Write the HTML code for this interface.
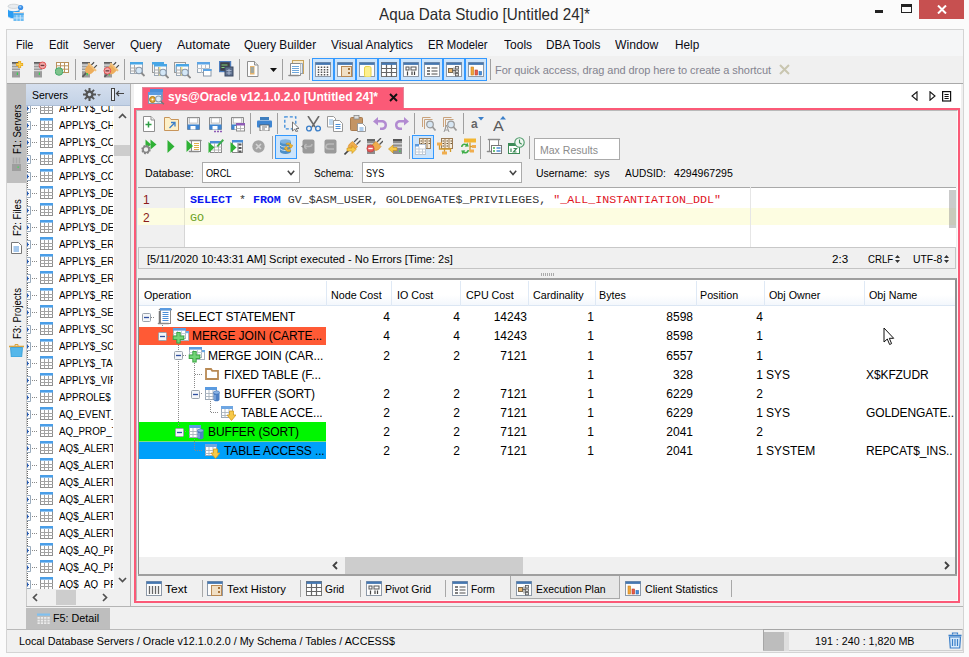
<!DOCTYPE html><html><head><meta charset="utf-8"><title>Aqua Data Studio [Untitled 24]*</title><style>
*{box-sizing:border-box}
html,body{margin:0;padding:0}
body{width:969px;height:657px;overflow:hidden;position:relative;background:#fbfbfb;font-family:"Liberation Sans",sans-serif;font-size:11px;color:#000}
.a{position:absolute}
.t{position:absolute;white-space:nowrap;line-height:14px;height:14px}
.m{position:absolute;white-space:nowrap;line-height:14px;height:14px}
.mono{font-family:"Liberation Mono",monospace}
.sep{position:absolute;width:1px;background:#a0a0a0}
.tg{position:absolute;top:58px;width:22px;height:23px;border:1px solid #3399ff;background:#cce4fb}
.row{position:absolute;left:26px;width:87px;height:17px;overflow:hidden}
.row .t{left:33px;top:2px;font-size:11px}
.hd{position:absolute;top:288px;font-size:11px;line-height:14px;white-space:nowrap}
.cs{position:absolute;top:281px;width:1px;height:25px;background:#e0e0e0}
.n{position:absolute;font-size:12px;line-height:14px;white-space:nowrap;text-align:right}
.l{position:absolute;font-size:12px;line-height:14px;white-space:nowrap}
.bt{position:absolute;top:581px;font-size:11px;line-height:14px;white-space:nowrap}
.bs{position:absolute;top:580px;width:1px;height:17px;background:#a8a8a8}
</style></head><body>
<div class="a" style="left:6px;top:29px;width:958px;height:624px;background:#f0f0f0;border:1px solid #d4d4d4"></div>
<div class="a" style="left:7px;top:30px;width:956px;height:26px;background:#f5f6f7"></div>
<div class="a" style="left:7px;top:83px;width:956px;height:1px;background:#a9a9a9"></div>
<div class="t" style="left:379.3px;top:4.85px;font-size:16.5px;transform:scaleX(0.923);transform-origin:0 0;line-height:18px;height:18px;color:#2b2b2b;">Aqua Data Studio [Untitled 24]*</div>
<svg class="a" style="left:7px;top:3px" width="18" height="19" viewBox="0 0 18 19" ><path d="M1 3.500v10c0 1.200 2.600 2.200 5.800 2.200s5.800-1 5.800-2.200v-10z" fill="#2b9df3"/>
<path d="M1 3.500v2.800c0 1.200 2.600 2 5.800 2s5.800-.8 5.800-2v-2.800z" fill="#f1f4f7"/><ellipse cx="6.800" cy="3.300" rx="5.800" ry="2.100" fill="#e9ecef" stroke="#c4c8cc" stroke-width=".7"/>
<path d="M1 13c0 1.200 2.600 2.200 5.800 2.200v.8c-3.200 0-5.800-1-5.800-2.200z" fill="#dfe9f2"/>
<circle cx="13.600" cy="4.500" r="2.600" fill="#3a8ee6"/><circle cx="13.300" cy="3.900" r="1.100" fill="#8cc3f5"/>
<rect x="6.500" y="9" width="10.200" height="9" fill="#6fbdf2"/><rect x="6.500" y="9" width="10.200" height="1.300" fill="#f5dcc6"/><rect x="6.500" y="10.300" width="10.200" height="1.600" fill="#4aa8ee"/>
<path d="M9.900 12v6M13.300 12v6M6.500 15h10.200" stroke="#cfe8fb" stroke-width=".9"/></svg>
<div class="a" style="left:875px;top:10px;width:8px;height:2.500px;background:#222"></div>
<div class="a" style="left:901px;top:4px;width:11px;height:9px;border:1px solid #222;border-top-width:3px"></div>
<div class="a" style="left:919px;top:0;width:45px;height:19px;background:#c75050"></div>
<svg class="a" style="left:937px;top:5px" width="10" height="9" viewBox="0 0 10 9" ><path d="M1 0.5l8 8M9 0.5l-8 8" stroke="#fff" stroke-width="2"/></svg>
<div class="m" style="left:15.6px;top:37.6px;font-size:12.8px;transform:scaleX(0.839);transform-origin:0 0;color:#0a0a14;">File</div>
<div class="m" style="left:48.7px;top:37.6px;font-size:12.8px;transform:scaleX(0.875);transform-origin:0 0;color:#0a0a14;">Edit</div>
<div class="m" style="left:83.1px;top:37.6px;font-size:12.8px;transform:scaleX(0.846);transform-origin:0 0;color:#0a0a14;">Server</div>
<div class="m" style="left:129.8px;top:37.6px;font-size:12.8px;transform:scaleX(0.912);transform-origin:0 0;color:#0a0a14;">Query</div>
<div class="m" style="left:176.8px;top:37.6px;font-size:12.8px;transform:scaleX(0.973);transform-origin:0 0;color:#0a0a14;">Automate</div>
<div class="m" style="left:244px;top:37.6px;font-size:12.8px;transform:scaleX(0.921);transform-origin:0 0;color:#0a0a14;">Query Builder</div>
<div class="m" style="left:330.8px;top:37.6px;font-size:12.8px;transform:scaleX(0.924);transform-origin:0 0;color:#0a0a14;">Visual Analytics</div>
<div class="m" style="left:428.4px;top:37.6px;font-size:12.8px;transform:scaleX(0.882);transform-origin:0 0;color:#0a0a14;">ER Modeler</div>
<div class="m" style="left:503.7px;top:37.6px;font-size:12.8px;transform:scaleX(0.940);transform-origin:0 0;color:#0a0a14;">Tools</div>
<div class="m" style="left:546.4px;top:37.6px;font-size:12.8px;transform:scaleX(0.925);transform-origin:0 0;color:#0a0a14;">DBA Tools</div>
<div class="m" style="left:615.3px;top:37.6px;font-size:12.8px;transform:scaleX(0.951);transform-origin:0 0;color:#0a0a14;">Window</div>
<div class="m" style="left:674.5px;top:37.6px;font-size:12.8px;transform:scaleX(0.919);transform-origin:0 0;color:#0a0a14;">Help</div>
<svg class="a" style="left:11px;top:60px" width="16" height="18" viewBox="0 0 16 18" ><rect x="1" y="2" width="8" height="15.500" fill="#9c9c9c"/><rect x="1" y="2" width="8" height="1.500" fill="#5e5e5e"/>
<rect x="1" y="4.500" width="8" height="1.200" fill="#dcdcdc"/><rect x="1" y="7.300" width="8" height="1.200" fill="#dcdcdc"/><rect x="1" y="10" width="8" height="1.200" fill="#dcdcdc"/><rect x="5.800" y="12.500" width="1.200" height="2.500" fill="#35d24f"/><path d="M8.600 1v7M5.100 4.500h7" stroke="#e9a516" stroke-width="3"/><path d="M8.600 1.600v5.800M5.700 4.500h5.800" stroke="#f7cf55" stroke-width="1.600"/></svg>
<svg class="a" style="left:33px;top:60px" width="16" height="18" viewBox="0 0 16 18" ><rect x="1" y="2" width="8" height="15.500" fill="#9c9c9c"/><rect x="1" y="2" width="8" height="1.500" fill="#5e5e5e"/>
<rect x="1" y="4.500" width="8" height="1.200" fill="#dcdcdc"/><rect x="1" y="7.300" width="8" height="1.200" fill="#dcdcdc"/><rect x="1" y="10" width="8" height="1.200" fill="#dcdcdc"/><rect x="5.800" y="12.500" width="1.200" height="2.500" fill="#35d24f"/><circle cx="9.500" cy="5.400" r="3.400" fill="#f2a7a7" stroke="#e05252" stroke-width="1"/><rect x="7.600" y="4.800" width="3.800" height="1.300" fill="#6b3a3a"/></svg>
<svg class="a" style="left:55px;top:61px" width="15" height="16" viewBox="0 0 15 16" ><rect x="1.500" y="1.500" width="12" height="10" fill="#fff" stroke="#b9915c"/>
<path d="M5.500 1v11M9.500 1v11M1 4.800h13M1 8.200h13" stroke="#b9915c" stroke-width="1"/><circle cx="4" cy="10.500" r="3.800" fill="#7fc28c" stroke="#3da566" stroke-width=".9"/></svg>
<div class="sep" style="left:75px;top:59px;height:21px"></div>
<svg class="a" style="left:81px;top:60px" width="17" height="18" viewBox="0 0 17 18" ><rect x="1" y="2" width="8" height="15.500" fill="#9c9c9c"/><rect x="1" y="2" width="8" height="1.500" fill="#5e5e5e"/>
<rect x="1" y="4.500" width="8" height="1.200" fill="#dcdcdc"/><rect x="1" y="7.300" width="8" height="1.200" fill="#dcdcdc"/><rect x="1" y="10" width="8" height="1.200" fill="#dcdcdc"/>
<g transform="translate(9.200,9) rotate(45)"><path d="M-2 -3.500v-4M2 -3.500v-4" stroke="#4a4a4a" stroke-width="1.200"/><path d="M0 4.500v6.500" stroke="#5a5a5a" stroke-width="1.700"/>
<path d="M-4.200 -2.500v3.500c0 2.600 1.800 4.600 4.200 4.600s4.200-2 4.200-4.600v-3.500z" fill="#edae5c"/><rect x="-5.600" y="-3.800" width="11.200" height="2" rx=".8" fill="#f1c07c"/></g>
<rect x="5.600" y="13" width="1.300" height="2.300" fill="#35d24f"/></svg>
<svg class="a" style="left:103px;top:60px" width="17" height="18" viewBox="0 0 17 18" ><rect x="1" y="2" width="8" height="15.500" fill="#9c9c9c"/><rect x="1" y="2" width="8" height="1.500" fill="#5e5e5e"/>
<rect x="1" y="4.500" width="8" height="1.200" fill="#dcdcdc"/><rect x="1" y="7.300" width="8" height="1.200" fill="#dcdcdc"/><rect x="1" y="10" width="8" height="1.200" fill="#dcdcdc"/>
<g transform="translate(9.200,9) rotate(45)"><path d="M-2 -3.500v-4M2 -3.500v-4" stroke="#4a4a4a" stroke-width="1.200"/><path d="M0 4.500v6.500" stroke="#5a5a5a" stroke-width="1.700"/>
<path d="M-4.200 -2.500v3.500c0 2.600 1.800 4.600 4.200 4.600s4.200-2 4.200-4.600v-3.500z" fill="#edae5c"/><rect x="-5.600" y="-3.800" width="11.200" height="2" rx=".8" fill="#f1c07c"/></g>
<rect x="5.600" y="13" width="1.300" height="2.300" fill="#35d24f"/><circle cx="4.400" cy="10.800" r="3.400" fill="#f2a7a7" stroke="#e05252" stroke-width="1"/><rect x="2.500" y="10.200" width="3.800" height="1.300" fill="#6b3a3a"/></svg>
<div class="sep" style="left:124px;top:59px;height:21px"></div>
<svg class="a" style="left:130px;top:62px" width="17" height="17" viewBox="0 0 17 17" ><g transform="translate(0,0)"><rect x="0.5" y="0.5" width="12" height="11" fill="#fafafa" stroke="#9aa7b5"/><rect x="0" y="0" width="13" height="2.500" fill="#48a6e6"/>
<path d="M4.500 3v9M0 6h8M0 9h7" stroke="#a9a9a9" stroke-width="1"/><circle cx="9" cy="8.500" r="3.200" fill="#d4e7f7" stroke="#8a98a8" stroke-width="1.100"/><path d="M11.500 11l3 3" stroke="#8a8a8a" stroke-width="1.800"/></g></svg>
<svg class="a" style="left:152px;top:62px" width="17" height="17" viewBox="0 0 17 17" ><rect x="0.5" y="0.5" width="11" height="10" fill="#f4f4f4" stroke="#9a9a9a"/><rect x="0" y="0" width="12" height="2.500" fill="#48a6e6"/><g transform="translate(2,2)"><rect x="0.5" y="0.5" width="12" height="11" fill="#fafafa" stroke="#9aa7b5"/><rect x="0" y="0" width="13" height="2.500" fill="#48a6e6"/><rect x="5" y="3" width="1.500" height="8.500" fill="#f7e98a"/>
<path d="M4.500 3v9M0 6h8M0 9h7" stroke="#a9a9a9" stroke-width="1"/><circle cx="9" cy="8.500" r="3.200" fill="#d4e7f7" stroke="#8a98a8" stroke-width="1.100"/><path d="M11.500 11l3 3" stroke="#8a8a8a" stroke-width="1.800"/></g></svg>
<svg class="a" style="left:174px;top:62px" width="17" height="17" viewBox="0 0 17 17" ><rect x="0.5" y="0.5" width="11" height="10" fill="#f4f4f4" stroke="#9a9a9a"/><rect x="1" y="3" width="1.500" height="7" fill="#b9dcf5"/><g transform="translate(2,2)"><rect x="0.5" y="0.5" width="12" height="11" fill="#fafafa" stroke="#9aa7b5"/><rect x="0" y="0" width="13" height="2.500" fill="#48a6e6"/><rect x="5" y="3" width="1.500" height="8.500" fill="#f7e98a"/>
<path d="M4.500 3v9M0 6h8M0 9h7" stroke="#a9a9a9" stroke-width="1"/><circle cx="9" cy="8.500" r="3.200" fill="#d4e7f7" stroke="#8a98a8" stroke-width="1.100"/><path d="M11.500 11l3 3" stroke="#8a8a8a" stroke-width="1.800"/></g></svg>
<svg class="a" style="left:197px;top:62px" width="15" height="15" viewBox="0 0 15 15" ><rect x="0.5" y="0.5" width="12" height="10" fill="#fafafa" stroke="#9aa7b5"/><rect x="0" y="0" width="13" height="2.500" fill="#5aa4e6"/><path d="M4.500 3v8M8.500 3v8M0 6.500h13" stroke="#b5c0cc"/>
<rect x="6.500" y="7.500" width="7.500" height="6.500" fill="#fff" stroke="#8a98a8"/><rect x="6" y="7" width="8.500" height="2" fill="#5aa4e6"/></svg>
<svg class="a" style="left:219px;top:61px" width="15" height="16" viewBox="0 0 15 16" ><rect x="0.500" y="0.500" width="11" height="10" fill="#3c4048" stroke="#4f7fc0" stroke-width="1.400"/><path d="M2.500 4h6M2.500 6.500h4" stroke="#7fd07f" stroke-width="1"/>
<rect x="6" y="6" width="8" height="9" fill="#5d6e8c" stroke="#3d4a63"/><path d="M7.500 9.500h5M7.500 12h5M10 8v6" stroke="#aebbd2" stroke-width=".9"/></svg>
<div class="sep" style="left:239px;top:59px;height:21px"></div>
<svg class="a" style="left:246px;top:61px" width="13" height="16" viewBox="0 0 13 16" ><path d="M1.500 0.500h7l3.500 3.500v11.500h-10.500z" fill="#fdfdfd" stroke="#8f8f8f"/><path d="M8.500 0.500v3.500h3.500" fill="#e9e9e9" stroke="#8f8f8f"/>
<rect x="4" y="5" width="4.500" height="8.500" fill="#e8b46a"/><path d="M4.500 7h3.500M4.500 9h3.500M4.500 11h3.500" stroke="#5b9bd5" stroke-width="1"/></svg>
<svg class="a" style="left:270px;top:68px" width="7" height="4" viewBox="0 0 7 4" ><path d="M0 0h7l-3.500 4z" fill="#111"/></svg>
<div class="sep" style="left:282px;top:59px;height:21px"></div>
<div class="sep" style="left:309px;top:59px;height:21px"></div>
<svg class="a" style="left:288px;top:60px" width="17" height="18" viewBox="0 0 17 18" ><rect x="4.500" y="0.500" width="11" height="13" fill="#f7ecd2" stroke="#c9a45c"/><path d="M2.500 3.500h10v12h-10z" fill="#fff" stroke="#8a8a8a"/><path d="M12.500 3.500h2v10h-2" fill="#e7eef7" stroke="#7f95b5" stroke-width=".8"/>
<path d="M4 6.500h7M4 8.500h7M4 10.500h7M4 12.500h7" stroke="#6fa8dc" stroke-width="1"/><path d="M1 15.500h9.500" stroke="#8a8a8a" stroke-width="1.600" stroke-linecap="round"/></svg>
<div class="tg" style="left:312px"></div>
<div class="tg" style="left:334px"></div>
<div class="tg" style="left:356px"></div>
<div class="tg" style="left:378px"></div>
<div class="tg" style="left:400px"></div>
<div class="tg" style="left:421px"></div>
<div class="tg" style="left:443px"></div>
<div class="tg" style="left:465px"></div>
<svg class="a" style="left:315px;top:62px" width="16" height="15" viewBox="0 0 16 15" ><rect x="0.5" y="0.5" width="15" height="14" fill="#fdfdfd" stroke="#8d99a8"/><rect x="0.500" y="0.500" width="15" height="2.400" fill="#4577b0"/><path d="M3.500 4.500v9M6.500 4.500v9M9.500 4.500v9M12.500 4.500v9" stroke="#555" stroke-width="1.500" stroke-dasharray="1.500 1"/></svg>
<svg class="a" style="left:337px;top:62px" width="16" height="15" viewBox="0 0 16 15" ><rect x="0.5" y="0.5" width="15" height="14" fill="#fdfdfd" stroke="#8d99a8"/><rect x="0.500" y="0.500" width="15" height="2.400" fill="#4577b0"/><rect x="4.500" y="4.500" width="10" height="10" fill="#f1dfc4" stroke="#b98a55"/><rect x="11" y="6" width="2" height="2" fill="#a8743c"/><rect x="11" y="10" width="2" height="2" fill="#a8743c"/></svg>
<svg class="a" style="left:359px;top:62px" width="16" height="15" viewBox="0 0 16 15" ><rect x="0.5" y="0.5" width="15" height="14" fill="#fdfdfd" stroke="#8d99a8"/><rect x="0.500" y="0.500" width="15" height="2.400" fill="#4577b0"/><rect x="5.500" y="4.500" width="6.500" height="10.500" rx="1.500" fill="#fdf08e" stroke="#e9d24a"/></svg>
<svg class="a" style="left:381px;top:62px" width="16" height="15" viewBox="0 0 16 15" ><rect x="0.5" y="0.5" width="15" height="14" fill="#fff" stroke="#777"/><path d="M0 6.500h16M0 10.500h16M5.500 2v13M10.500 2v13" stroke="#666" stroke-width="1.200"/><rect x="0.500" y="0.500" width="15" height="2.400" fill="#4577b0"/></svg>
<svg class="a" style="left:403px;top:62px" width="16" height="15" viewBox="0 0 16 15" ><rect x="0.5" y="0.5" width="15" height="14" fill="#fdfdfd" stroke="#8d99a8"/><rect x="0.500" y="0.500" width="15" height="2.400" fill="#4577b0"/><rect x="3" y="5" width="3" height="3" fill="none" stroke="#555"/><rect x="8" y="5" width="5" height="3" fill="none" stroke="#555"/><path d="M4.500 9.500v4M9 13v-3.500M11.500 9.500v3.500" stroke="#444" stroke-width="1.200"/></svg>
<svg class="a" style="left:424px;top:62px" width="16" height="15" viewBox="0 0 16 15" ><rect x="0.5" y="0.5" width="15" height="14" fill="#fdfdfd" stroke="#8d99a8"/><rect x="0.500" y="0.500" width="15" height="2.400" fill="#4577b0"/><path d="M3 6h3M3 9h3M3 12h3" stroke="#555" stroke-width="1.400"/><path d="M7.500 6h6M7.500 9h6M7.500 12h6" stroke="#888" stroke-width="1.400"/></svg>
<svg class="a" style="left:446px;top:62px" width="16" height="15" viewBox="0 0 16 15" ><rect x="0.5" y="0.5" width="15" height="14" fill="#fdfdfd" stroke="#8d99a8"/><rect x="0.500" y="0.500" width="15" height="2.400" fill="#4577b0"/><rect x="2.500" y="6.500" width="4" height="4" fill="#e8b46a" stroke="#7a6a50"/><rect x="9.500" y="4.500" width="3" height="2.500" fill="#ddd" stroke="#555" stroke-width=".8"/><rect x="9.500" y="8" width="3" height="2.500" fill="#ddd" stroke="#555" stroke-width=".8"/><rect x="9.500" y="11.400" width="3" height="2.500" fill="#ddd" stroke="#555" stroke-width=".8"/><path d="M6.500 8.500h3M8 5.500v7" stroke="#555" stroke-width=".8"/></svg>
<svg class="a" style="left:468px;top:62px" width="16" height="15" viewBox="0 0 16 15" ><rect x="0.5" y="0.5" width="15" height="14" fill="#fdfdfd" stroke="#8d99a8"/><rect x="0.500" y="0.500" width="15" height="2.400" fill="#4577b0"/><rect x="3" y="5" width="2.600" height="8" fill="#f0a63a" stroke="#c9821c" stroke-width=".6"/><rect x="7" y="8" width="2.600" height="5" fill="#e85d4a" stroke="#b93c2c" stroke-width=".6"/><rect x="11" y="9.500" width="2.600" height="3.500" fill="#4a8fd8" stroke="#2f6cb3" stroke-width=".6"/></svg>
<div class="sep" style="left:490px;top:59px;height:21px"></div>
<div class="t" style="left:495px;top:63px;font-size:11px;color:#83838f;letter-spacing:-0.06px">For quick access, drag and drop here to create a shortcut</div>
<svg class="a" style="left:779px;top:64px" width="11" height="11" viewBox="0 0 11 11" ><path d="M1 1l9 9M10 1l-9 9" stroke="#c9c6b0" stroke-width="2"/></svg>
<div class="a" style="left:7px;top:84px;width:20px;height:99px;background:#bfbfbf"></div>
<div class="t" style="left:16.5px;top:154px;transform-origin:0 0;transform:rotate(-90deg) translateY(-7px) scaleX(.87);font-size:11px;color:#000">F1: Servers</div>
<div class="t" style="left:16.5px;top:236px;transform-origin:0 0;transform:rotate(-90deg) translateY(-7px) scaleX(.87);font-size:11px;color:#000">F2: Files</div>
<div class="t" style="left:16.5px;top:339px;transform-origin:0 0;transform:rotate(-90deg) translateY(-7px) scaleX(.87);font-size:11px;color:#000">F3: Projects</div>
<svg class="a" style="left:11px;top:157px" width="11" height="14" viewBox="0 0 11 14" ><rect x="1" y="7" width="9" height="7" fill="#9e9e9e"/><path d="M2.500 0.500v6M5.500 0.500v6M8.500 0.500v6" stroke="#a9a9a9" stroke-width="1.600"/><rect x="6.500" y="9.500" width="1.300" height="1.300" fill="#39e353"/></svg>
<svg class="a" style="left:11px;top:242px" width="11" height="12" viewBox="0 0 11 12" ><path d="M0.500 0.500h7l3 3v8h-10z" fill="#fff" stroke="#777"/><path d="M2.500 5h5.500M2.500 7h5.500M2.500 9h5.500" stroke="#4a8fd8" stroke-width="1"/></svg>
<svg class="a" style="left:9px;top:344px" width="15" height="13" viewBox="0 0 15 13" ><path d="M0 2.500h15" stroke="#d9a441" stroke-width="1.600"/><path d="M6 2v-1.500h3v1.500" fill="none" stroke="#d9a441"/><path d="M1.500 3.500h12l-.8 9.500h-10.400z" fill="#55b7ea" stroke="#2f9bd6" stroke-width=".8"/></svg>
<div class="a" style="left:26px;top:84px;width:105px;height:22px;background:linear-gradient(#d5dfee,#c3d2e6);border-bottom:1px solid #aebfd6"></div>
<div class="t" style="left:32px;top:88px;font-size:11px;transform:scaleX(.95);transform-origin:0 0">Servers</div>
<svg class="a" style="left:83px;top:88px" width="18" height="13" viewBox="0 0 18 13" ><g fill="#555"><circle cx="6.500" cy="6.500" r="4"/><g stroke="#555" stroke-width="2"><path d="M6.500 0v13M0 6.500h13M1.900 1.900l9.200 9.200M11.100 1.900l-9.200 9.200"/></g></g><circle cx="6.500" cy="6.500" r="1.700" fill="#d0dbea"/><path d="M14 6h4l-2 2.500z" fill="#777"/></svg>
<svg class="a" style="left:111px;top:88px" width="14" height="13" viewBox="0 0 14 13" ><rect x="0.500" y="0.500" width="3" height="12" fill="#eef2f8" stroke="#444"/><path d="M5.500 5.500h7.500M8 3l-2.500 2.500 2.500 2.500" fill="none" stroke="#444" stroke-width="1.200"/></svg>
<div class="a" style="left:26px;top:106px;width:88px;height:482.500px;background:#fff"></div>
<div class="a" style="left:27px;top:106px;width:0;height:482px;border-left:1px dotted #666"></div>
<div class="a" style="left:26px;top:106px;width:88px;height:482.500px;overflow:hidden">
<div class="row" style="left:0;top:-7px"><svg class="a" style="left:0;top:2px" width="30" height="14" viewBox="0 0 30 14">
<path d="M0 3.500h4.500v8h-4.500" fill="#fff" stroke="#9ab" stroke-width="1"/><path d="M0 7.500h3M1.500 5.500v4" stroke="#2a5db0" stroke-width="1.200"/>
<path d="M6 7.500h1M8 7.500h1M10 7.500h1" stroke="#888" stroke-width="1"/>
<rect x="14.500" y="0.500" width="12" height="12" fill="#fff" stroke="#8e8e8e"/><rect x="14" y="0" width="13" height="2.600" fill="#4a9ee8"/>
<path d="M18.500 3v9.500M22.500 3v9.500M14 6.500h13M14 9.500h13" stroke="#a3a3a3" stroke-width="1"/></svg><div class="t" style="transform:scaleX(.89);transform-origin:0 0">APPLY$_CDR</div></div>
<div class="row" style="left:0;top:10px"><svg class="a" style="left:0;top:2px" width="30" height="14" viewBox="0 0 30 14">
<path d="M0 3.500h4.500v8h-4.500" fill="#fff" stroke="#9ab" stroke-width="1"/><path d="M0 7.500h3M1.500 5.500v4" stroke="#2a5db0" stroke-width="1.200"/>
<path d="M6 7.500h1M8 7.500h1M10 7.500h1" stroke="#888" stroke-width="1"/>
<rect x="14.500" y="0.500" width="12" height="12" fill="#fff" stroke="#8e8e8e"/><rect x="14" y="0" width="13" height="2.600" fill="#4a9ee8"/>
<path d="M18.500 3v9.500M22.500 3v9.500M14 6.500h13M14 9.500h13" stroke="#a3a3a3" stroke-width="1"/></svg><div class="t" style="transform:scaleX(.89);transform-origin:0 0">APPLY$_CHA</div></div>
<div class="row" style="left:0;top:27px"><svg class="a" style="left:0;top:2px" width="30" height="14" viewBox="0 0 30 14">
<path d="M0 3.500h4.500v8h-4.500" fill="#fff" stroke="#9ab" stroke-width="1"/><path d="M0 7.500h3M1.500 5.500v4" stroke="#2a5db0" stroke-width="1.200"/>
<path d="M6 7.500h1M8 7.500h1M10 7.500h1" stroke="#888" stroke-width="1"/>
<rect x="14.500" y="0.500" width="12" height="12" fill="#fff" stroke="#8e8e8e"/><rect x="14" y="0" width="13" height="2.600" fill="#4a9ee8"/>
<path d="M18.500 3v9.500M22.500 3v9.500M14 6.500h13M14 9.500h13" stroke="#a3a3a3" stroke-width="1"/></svg><div class="t" style="transform:scaleX(.89);transform-origin:0 0">APPLY$_CON</div></div>
<div class="row" style="left:0;top:44px"><svg class="a" style="left:0;top:2px" width="30" height="14" viewBox="0 0 30 14">
<path d="M0 3.500h4.500v8h-4.500" fill="#fff" stroke="#9ab" stroke-width="1"/><path d="M0 7.500h3M1.500 5.500v4" stroke="#2a5db0" stroke-width="1.200"/>
<path d="M6 7.500h1M8 7.500h1M10 7.500h1" stroke="#888" stroke-width="1"/>
<rect x="14.500" y="0.500" width="12" height="12" fill="#fff" stroke="#8e8e8e"/><rect x="14" y="0" width="13" height="2.600" fill="#4a9ee8"/>
<path d="M18.500 3v9.500M22.500 3v9.500M14 6.500h13M14 9.500h13" stroke="#a3a3a3" stroke-width="1"/></svg><div class="t" style="transform:scaleX(.89);transform-origin:0 0">APPLY$_CON</div></div>
<div class="row" style="left:0;top:61px"><svg class="a" style="left:0;top:2px" width="30" height="14" viewBox="0 0 30 14">
<path d="M0 3.500h4.500v8h-4.500" fill="#fff" stroke="#9ab" stroke-width="1"/><path d="M0 7.500h3M1.500 5.500v4" stroke="#2a5db0" stroke-width="1.200"/>
<path d="M6 7.500h1M8 7.500h1M10 7.500h1" stroke="#888" stroke-width="1"/>
<rect x="14.500" y="0.500" width="12" height="12" fill="#fff" stroke="#8e8e8e"/><rect x="14" y="0" width="13" height="2.600" fill="#4a9ee8"/>
<path d="M18.500 3v9.500M22.500 3v9.500M14 6.500h13M14 9.500h13" stroke="#a3a3a3" stroke-width="1"/></svg><div class="t" style="transform:scaleX(.89);transform-origin:0 0">APPLY$_CON</div></div>
<div class="row" style="left:0;top:78px"><svg class="a" style="left:0;top:2px" width="30" height="14" viewBox="0 0 30 14">
<path d="M0 3.500h4.500v8h-4.500" fill="#fff" stroke="#9ab" stroke-width="1"/><path d="M0 7.500h3M1.500 5.500v4" stroke="#2a5db0" stroke-width="1.200"/>
<path d="M6 7.500h1M8 7.500h1M10 7.500h1" stroke="#888" stroke-width="1"/>
<rect x="14.500" y="0.500" width="12" height="12" fill="#fff" stroke="#8e8e8e"/><rect x="14" y="0" width="13" height="2.600" fill="#4a9ee8"/>
<path d="M18.500 3v9.500M22.500 3v9.500M14 6.500h13M14 9.500h13" stroke="#a3a3a3" stroke-width="1"/></svg><div class="t" style="transform:scaleX(.89);transform-origin:0 0">APPLY$_DES</div></div>
<div class="row" style="left:0;top:95px"><svg class="a" style="left:0;top:2px" width="30" height="14" viewBox="0 0 30 14">
<path d="M0 3.500h4.500v8h-4.500" fill="#fff" stroke="#9ab" stroke-width="1"/><path d="M0 7.500h3M1.500 5.500v4" stroke="#2a5db0" stroke-width="1.200"/>
<path d="M6 7.500h1M8 7.500h1M10 7.500h1" stroke="#888" stroke-width="1"/>
<rect x="14.500" y="0.500" width="12" height="12" fill="#fff" stroke="#8e8e8e"/><rect x="14" y="0" width="13" height="2.600" fill="#4a9ee8"/>
<path d="M18.500 3v9.500M22.500 3v9.500M14 6.500h13M14 9.500h13" stroke="#a3a3a3" stroke-width="1"/></svg><div class="t" style="transform:scaleX(.89);transform-origin:0 0">APPLY$_DES</div></div>
<div class="row" style="left:0;top:112px"><svg class="a" style="left:0;top:2px" width="30" height="14" viewBox="0 0 30 14">
<path d="M0 3.500h4.500v8h-4.500" fill="#fff" stroke="#9ab" stroke-width="1"/><path d="M0 7.500h3M1.500 5.500v4" stroke="#2a5db0" stroke-width="1.200"/>
<path d="M6 7.500h1M8 7.500h1M10 7.500h1" stroke="#888" stroke-width="1"/>
<rect x="14.500" y="0.500" width="12" height="12" fill="#fff" stroke="#8e8e8e"/><rect x="14" y="0" width="13" height="2.600" fill="#4a9ee8"/>
<path d="M18.500 3v9.500M22.500 3v9.500M14 6.500h13M14 9.500h13" stroke="#a3a3a3" stroke-width="1"/></svg><div class="t" style="transform:scaleX(.89);transform-origin:0 0">APPLY$_DES</div></div>
<div class="row" style="left:0;top:129px"><svg class="a" style="left:0;top:2px" width="30" height="14" viewBox="0 0 30 14">
<path d="M0 3.500h4.500v8h-4.500" fill="#fff" stroke="#9ab" stroke-width="1"/><path d="M0 7.500h3M1.500 5.500v4" stroke="#2a5db0" stroke-width="1.200"/>
<path d="M6 7.500h1M8 7.500h1M10 7.500h1" stroke="#888" stroke-width="1"/>
<rect x="14.500" y="0.500" width="12" height="12" fill="#fff" stroke="#8e8e8e"/><rect x="14" y="0" width="13" height="2.600" fill="#4a9ee8"/>
<path d="M18.500 3v9.500M22.500 3v9.500M14 6.500h13M14 9.500h13" stroke="#a3a3a3" stroke-width="1"/></svg><div class="t" style="transform:scaleX(.89);transform-origin:0 0">APPLY$_ERR</div></div>
<div class="row" style="left:0;top:146px"><svg class="a" style="left:0;top:2px" width="30" height="14" viewBox="0 0 30 14">
<path d="M0 3.500h4.500v8h-4.500" fill="#fff" stroke="#9ab" stroke-width="1"/><path d="M0 7.500h3M1.500 5.500v4" stroke="#2a5db0" stroke-width="1.200"/>
<path d="M6 7.500h1M8 7.500h1M10 7.500h1" stroke="#888" stroke-width="1"/>
<rect x="14.500" y="0.500" width="12" height="12" fill="#fff" stroke="#8e8e8e"/><rect x="14" y="0" width="13" height="2.600" fill="#4a9ee8"/>
<path d="M18.500 3v9.500M22.500 3v9.500M14 6.500h13M14 9.500h13" stroke="#a3a3a3" stroke-width="1"/></svg><div class="t" style="transform:scaleX(.89);transform-origin:0 0">APPLY$_ERR</div></div>
<div class="row" style="left:0;top:163px"><svg class="a" style="left:0;top:2px" width="30" height="14" viewBox="0 0 30 14">
<path d="M0 3.500h4.500v8h-4.500" fill="#fff" stroke="#9ab" stroke-width="1"/><path d="M0 7.500h3M1.500 5.500v4" stroke="#2a5db0" stroke-width="1.200"/>
<path d="M6 7.500h1M8 7.500h1M10 7.500h1" stroke="#888" stroke-width="1"/>
<rect x="14.500" y="0.500" width="12" height="12" fill="#fff" stroke="#8e8e8e"/><rect x="14" y="0" width="13" height="2.600" fill="#4a9ee8"/>
<path d="M18.500 3v9.500M22.500 3v9.500M14 6.500h13M14 9.500h13" stroke="#a3a3a3" stroke-width="1"/></svg><div class="t" style="transform:scaleX(.89);transform-origin:0 0">APPLY$_ERR</div></div>
<div class="row" style="left:0;top:180px"><svg class="a" style="left:0;top:2px" width="30" height="14" viewBox="0 0 30 14">
<path d="M0 3.500h4.500v8h-4.500" fill="#fff" stroke="#9ab" stroke-width="1"/><path d="M0 7.500h3M1.500 5.500v4" stroke="#2a5db0" stroke-width="1.200"/>
<path d="M6 7.500h1M8 7.500h1M10 7.500h1" stroke="#888" stroke-width="1"/>
<rect x="14.500" y="0.500" width="12" height="12" fill="#fff" stroke="#8e8e8e"/><rect x="14" y="0" width="13" height="2.600" fill="#4a9ee8"/>
<path d="M18.500 3v9.500M22.500 3v9.500M14 6.500h13M14 9.500h13" stroke="#a3a3a3" stroke-width="1"/></svg><div class="t" style="transform:scaleX(.89);transform-origin:0 0">APPLY$_REP</div></div>
<div class="row" style="left:0;top:197px"><svg class="a" style="left:0;top:2px" width="30" height="14" viewBox="0 0 30 14">
<path d="M0 3.500h4.500v8h-4.500" fill="#fff" stroke="#9ab" stroke-width="1"/><path d="M0 7.500h3M1.500 5.500v4" stroke="#2a5db0" stroke-width="1.200"/>
<path d="M6 7.500h1M8 7.500h1M10 7.500h1" stroke="#888" stroke-width="1"/>
<rect x="14.500" y="0.500" width="12" height="12" fill="#fff" stroke="#8e8e8e"/><rect x="14" y="0" width="13" height="2.600" fill="#4a9ee8"/>
<path d="M18.500 3v9.500M22.500 3v9.500M14 6.500h13M14 9.500h13" stroke="#a3a3a3" stroke-width="1"/></svg><div class="t" style="transform:scaleX(.89);transform-origin:0 0">APPLY$_SET</div></div>
<div class="row" style="left:0;top:214px"><svg class="a" style="left:0;top:2px" width="30" height="14" viewBox="0 0 30 14">
<path d="M0 3.500h4.500v8h-4.500" fill="#fff" stroke="#9ab" stroke-width="1"/><path d="M0 7.500h3M1.500 5.500v4" stroke="#2a5db0" stroke-width="1.200"/>
<path d="M6 7.500h1M8 7.500h1M10 7.500h1" stroke="#888" stroke-width="1"/>
<rect x="14.500" y="0.500" width="12" height="12" fill="#fff" stroke="#8e8e8e"/><rect x="14" y="0" width="13" height="2.600" fill="#4a9ee8"/>
<path d="M18.500 3v9.500M22.500 3v9.500M14 6.500h13M14 9.500h13" stroke="#a3a3a3" stroke-width="1"/></svg><div class="t" style="transform:scaleX(.89);transform-origin:0 0">APPLY$_SOU</div></div>
<div class="row" style="left:0;top:231px"><svg class="a" style="left:0;top:2px" width="30" height="14" viewBox="0 0 30 14">
<path d="M0 3.500h4.500v8h-4.500" fill="#fff" stroke="#9ab" stroke-width="1"/><path d="M0 7.500h3M1.500 5.500v4" stroke="#2a5db0" stroke-width="1.200"/>
<path d="M6 7.500h1M8 7.500h1M10 7.500h1" stroke="#888" stroke-width="1"/>
<rect x="14.500" y="0.500" width="12" height="12" fill="#fff" stroke="#8e8e8e"/><rect x="14" y="0" width="13" height="2.600" fill="#4a9ee8"/>
<path d="M18.500 3v9.500M22.500 3v9.500M14 6.500h13M14 9.500h13" stroke="#a3a3a3" stroke-width="1"/></svg><div class="t" style="transform:scaleX(.89);transform-origin:0 0">APPLY$_SOU</div></div>
<div class="row" style="left:0;top:248px"><svg class="a" style="left:0;top:2px" width="30" height="14" viewBox="0 0 30 14">
<path d="M0 3.500h4.500v8h-4.500" fill="#fff" stroke="#9ab" stroke-width="1"/><path d="M0 7.500h3M1.500 5.500v4" stroke="#2a5db0" stroke-width="1.200"/>
<path d="M6 7.500h1M8 7.500h1M10 7.500h1" stroke="#888" stroke-width="1"/>
<rect x="14.500" y="0.500" width="12" height="12" fill="#fff" stroke="#8e8e8e"/><rect x="14" y="0" width="13" height="2.600" fill="#4a9ee8"/>
<path d="M18.500 3v9.500M22.500 3v9.500M14 6.500h13M14 9.500h13" stroke="#a3a3a3" stroke-width="1"/></svg><div class="t" style="transform:scaleX(.89);transform-origin:0 0">APPLY$_TAB</div></div>
<div class="row" style="left:0;top:265px"><svg class="a" style="left:0;top:2px" width="30" height="14" viewBox="0 0 30 14">
<path d="M0 3.500h4.500v8h-4.500" fill="#fff" stroke="#9ab" stroke-width="1"/><path d="M0 7.500h3M1.500 5.500v4" stroke="#2a5db0" stroke-width="1.200"/>
<path d="M6 7.500h1M8 7.500h1M10 7.500h1" stroke="#888" stroke-width="1"/>
<rect x="14.500" y="0.500" width="12" height="12" fill="#fff" stroke="#8e8e8e"/><rect x="14" y="0" width="13" height="2.600" fill="#4a9ee8"/>
<path d="M18.500 3v9.500M22.500 3v9.500M14 6.500h13M14 9.500h13" stroke="#a3a3a3" stroke-width="1"/></svg><div class="t" style="transform:scaleX(.89);transform-origin:0 0">APPLY$_VIR</div></div>
<div class="row" style="left:0;top:282px"><svg class="a" style="left:0;top:2px" width="30" height="14" viewBox="0 0 30 14">
<path d="M0 3.500h4.500v8h-4.500" fill="#fff" stroke="#9ab" stroke-width="1"/><path d="M0 7.500h3M1.500 5.500v4" stroke="#2a5db0" stroke-width="1.200"/>
<path d="M6 7.500h1M8 7.500h1M10 7.500h1" stroke="#888" stroke-width="1"/>
<rect x="14.500" y="0.500" width="12" height="12" fill="#fff" stroke="#8e8e8e"/><rect x="14" y="0" width="13" height="2.600" fill="#4a9ee8"/>
<path d="M18.500 3v9.500M22.500 3v9.500M14 6.500h13M14 9.500h13" stroke="#a3a3a3" stroke-width="1"/></svg><div class="t" style="transform:scaleX(.89);transform-origin:0 0">APPROLE$</div></div>
<div class="row" style="left:0;top:299px"><svg class="a" style="left:0;top:2px" width="30" height="14" viewBox="0 0 30 14">
<path d="M0 3.500h4.500v8h-4.500" fill="#fff" stroke="#9ab" stroke-width="1"/><path d="M0 7.500h3M1.500 5.500v4" stroke="#2a5db0" stroke-width="1.200"/>
<path d="M6 7.500h1M8 7.500h1M10 7.500h1" stroke="#888" stroke-width="1"/>
<rect x="14.500" y="0.500" width="12" height="12" fill="#fff" stroke="#8e8e8e"/><rect x="14" y="0" width="13" height="2.600" fill="#4a9ee8"/>
<path d="M18.500 3v9.500M22.500 3v9.500M14 6.500h13M14 9.500h13" stroke="#a3a3a3" stroke-width="1"/></svg><div class="t" style="transform:scaleX(.89);transform-origin:0 0">AQ_EVENT_T</div></div>
<div class="row" style="left:0;top:316px"><svg class="a" style="left:0;top:2px" width="30" height="14" viewBox="0 0 30 14">
<path d="M0 3.500h4.500v8h-4.500" fill="#fff" stroke="#9ab" stroke-width="1"/><path d="M0 7.500h3M1.500 5.500v4" stroke="#2a5db0" stroke-width="1.200"/>
<path d="M6 7.500h1M8 7.500h1M10 7.500h1" stroke="#888" stroke-width="1"/>
<rect x="14.500" y="0.500" width="12" height="12" fill="#fff" stroke="#8e8e8e"/><rect x="14" y="0" width="13" height="2.600" fill="#4a9ee8"/>
<path d="M18.500 3v9.500M22.500 3v9.500M14 6.500h13M14 9.500h13" stroke="#a3a3a3" stroke-width="1"/></svg><div class="t" style="transform:scaleX(.89);transform-origin:0 0">AQ_PROP_TA</div></div>
<div class="row" style="left:0;top:333px"><svg class="a" style="left:0;top:2px" width="30" height="14" viewBox="0 0 30 14">
<path d="M0 3.500h4.500v8h-4.500" fill="#fff" stroke="#9ab" stroke-width="1"/><path d="M0 7.500h3M1.500 5.500v4" stroke="#2a5db0" stroke-width="1.200"/>
<path d="M6 7.500h1M8 7.500h1M10 7.500h1" stroke="#888" stroke-width="1"/>
<rect x="14.500" y="0.500" width="12" height="12" fill="#fff" stroke="#8e8e8e"/><rect x="14" y="0" width="13" height="2.600" fill="#4a9ee8"/>
<path d="M18.500 3v9.500M22.500 3v9.500M14 6.500h13M14 9.500h13" stroke="#a3a3a3" stroke-width="1"/></svg><div class="t" style="transform:scaleX(.89);transform-origin:0 0">AQ$_ALERT_</div></div>
<div class="row" style="left:0;top:350px"><svg class="a" style="left:0;top:2px" width="30" height="14" viewBox="0 0 30 14">
<path d="M0 3.500h4.500v8h-4.500" fill="#fff" stroke="#9ab" stroke-width="1"/><path d="M0 7.500h3M1.500 5.500v4" stroke="#2a5db0" stroke-width="1.200"/>
<path d="M6 7.500h1M8 7.500h1M10 7.500h1" stroke="#888" stroke-width="1"/>
<rect x="14.500" y="0.500" width="12" height="12" fill="#fff" stroke="#8e8e8e"/><rect x="14" y="0" width="13" height="2.600" fill="#4a9ee8"/>
<path d="M18.500 3v9.500M22.500 3v9.500M14 6.500h13M14 9.500h13" stroke="#a3a3a3" stroke-width="1"/></svg><div class="t" style="transform:scaleX(.89);transform-origin:0 0">AQ$_ALERT_</div></div>
<div class="row" style="left:0;top:367px"><svg class="a" style="left:0;top:2px" width="30" height="14" viewBox="0 0 30 14">
<path d="M0 3.500h4.500v8h-4.500" fill="#fff" stroke="#9ab" stroke-width="1"/><path d="M0 7.500h3M1.500 5.500v4" stroke="#2a5db0" stroke-width="1.200"/>
<path d="M6 7.500h1M8 7.500h1M10 7.500h1" stroke="#888" stroke-width="1"/>
<rect x="14.500" y="0.500" width="12" height="12" fill="#fff" stroke="#8e8e8e"/><rect x="14" y="0" width="13" height="2.600" fill="#4a9ee8"/>
<path d="M18.500 3v9.500M22.500 3v9.500M14 6.500h13M14 9.500h13" stroke="#a3a3a3" stroke-width="1"/></svg><div class="t" style="transform:scaleX(.89);transform-origin:0 0">AQ$_ALERT_</div></div>
<div class="row" style="left:0;top:384px"><svg class="a" style="left:0;top:2px" width="30" height="14" viewBox="0 0 30 14">
<path d="M0 3.500h4.500v8h-4.500" fill="#fff" stroke="#9ab" stroke-width="1"/><path d="M0 7.500h3M1.500 5.500v4" stroke="#2a5db0" stroke-width="1.200"/>
<path d="M6 7.500h1M8 7.500h1M10 7.500h1" stroke="#888" stroke-width="1"/>
<rect x="14.500" y="0.500" width="12" height="12" fill="#fff" stroke="#8e8e8e"/><rect x="14" y="0" width="13" height="2.600" fill="#4a9ee8"/>
<path d="M18.500 3v9.500M22.500 3v9.500M14 6.500h13M14 9.500h13" stroke="#a3a3a3" stroke-width="1"/></svg><div class="t" style="transform:scaleX(.89);transform-origin:0 0">AQ$_ALERT_</div></div>
<div class="row" style="left:0;top:401px"><svg class="a" style="left:0;top:2px" width="30" height="14" viewBox="0 0 30 14">
<path d="M0 3.500h4.500v8h-4.500" fill="#fff" stroke="#9ab" stroke-width="1"/><path d="M0 7.500h3M1.500 5.500v4" stroke="#2a5db0" stroke-width="1.200"/>
<path d="M6 7.500h1M8 7.500h1M10 7.500h1" stroke="#888" stroke-width="1"/>
<rect x="14.500" y="0.500" width="12" height="12" fill="#fff" stroke="#8e8e8e"/><rect x="14" y="0" width="13" height="2.600" fill="#4a9ee8"/>
<path d="M18.500 3v9.500M22.500 3v9.500M14 6.500h13M14 9.500h13" stroke="#a3a3a3" stroke-width="1"/></svg><div class="t" style="transform:scaleX(.89);transform-origin:0 0">AQ$_ALERT_</div></div>
<div class="row" style="left:0;top:418px"><svg class="a" style="left:0;top:2px" width="30" height="14" viewBox="0 0 30 14">
<path d="M0 3.500h4.500v8h-4.500" fill="#fff" stroke="#9ab" stroke-width="1"/><path d="M0 7.500h3M1.500 5.500v4" stroke="#2a5db0" stroke-width="1.200"/>
<path d="M6 7.500h1M8 7.500h1M10 7.500h1" stroke="#888" stroke-width="1"/>
<rect x="14.500" y="0.500" width="12" height="12" fill="#fff" stroke="#8e8e8e"/><rect x="14" y="0" width="13" height="2.600" fill="#4a9ee8"/>
<path d="M18.500 3v9.500M22.500 3v9.500M14 6.500h13M14 9.500h13" stroke="#a3a3a3" stroke-width="1"/></svg><div class="t" style="transform:scaleX(.89);transform-origin:0 0">AQ$_ALERT_</div></div>
<div class="row" style="left:0;top:435px"><svg class="a" style="left:0;top:2px" width="30" height="14" viewBox="0 0 30 14">
<path d="M0 3.500h4.500v8h-4.500" fill="#fff" stroke="#9ab" stroke-width="1"/><path d="M0 7.500h3M1.500 5.500v4" stroke="#2a5db0" stroke-width="1.200"/>
<path d="M6 7.500h1M8 7.500h1M10 7.500h1" stroke="#888" stroke-width="1"/>
<rect x="14.500" y="0.500" width="12" height="12" fill="#fff" stroke="#8e8e8e"/><rect x="14" y="0" width="13" height="2.600" fill="#4a9ee8"/>
<path d="M18.500 3v9.500M22.500 3v9.500M14 6.500h13M14 9.500h13" stroke="#a3a3a3" stroke-width="1"/></svg><div class="t" style="transform:scaleX(.89);transform-origin:0 0">AQ$_AQ_PR</div></div>
<div class="row" style="left:0;top:452px"><svg class="a" style="left:0;top:2px" width="30" height="14" viewBox="0 0 30 14">
<path d="M0 3.500h4.500v8h-4.500" fill="#fff" stroke="#9ab" stroke-width="1"/><path d="M0 7.500h3M1.500 5.500v4" stroke="#2a5db0" stroke-width="1.200"/>
<path d="M6 7.500h1M8 7.500h1M10 7.500h1" stroke="#888" stroke-width="1"/>
<rect x="14.500" y="0.500" width="12" height="12" fill="#fff" stroke="#8e8e8e"/><rect x="14" y="0" width="13" height="2.600" fill="#4a9ee8"/>
<path d="M18.500 3v9.500M22.500 3v9.500M14 6.500h13M14 9.500h13" stroke="#a3a3a3" stroke-width="1"/></svg><div class="t" style="transform:scaleX(.89);transform-origin:0 0">AQ$_AQ_PR</div></div>
<div class="row" style="left:0;top:469px"><svg class="a" style="left:0;top:2px" width="30" height="14" viewBox="0 0 30 14">
<path d="M0 3.500h4.500v8h-4.500" fill="#fff" stroke="#9ab" stroke-width="1"/><path d="M0 7.500h3M1.500 5.500v4" stroke="#2a5db0" stroke-width="1.200"/>
<path d="M6 7.500h1M8 7.500h1M10 7.500h1" stroke="#888" stroke-width="1"/>
<rect x="14.500" y="0.500" width="12" height="12" fill="#fff" stroke="#8e8e8e"/><rect x="14" y="0" width="13" height="2.600" fill="#4a9ee8"/>
<path d="M18.500 3v9.500M22.500 3v9.500M14 6.500h13M14 9.500h13" stroke="#a3a3a3" stroke-width="1"/></svg><div class="t" style="transform:scaleX(.89);transform-origin:0 0">AQ$_AQ_PR</div></div>
</div>
<div class="a" style="left:114px;top:106px;width:17px;height:484px;background:#f0f0f0"></div>
<svg class="a" style="left:118px;top:113px" width="9" height="6" viewBox="0 0 9 6" ><path d="M1 5l3.500-3.500 3.500 3.500" fill="none" stroke="#505050" stroke-width="1.700"/></svg>
<div class="a" style="left:114px;top:145px;width:17px;height:11px;background:#cdcdcd"></div>
<svg class="a" style="left:117.5px;top:576.5px" width="9" height="6" viewBox="0 0 9 6" ><path d="M1 1l3.500 3.500 3.500-3.500" fill="none" stroke="#505050" stroke-width="1.700"/></svg>
<div class="a" style="left:26px;top:588.500px;width:88px;height:17.500px;background:#f0f0f0"></div>
<svg class="a" style="left:32px;top:593px" width="6" height="9" viewBox="0 0 6 9" ><path d="M5 1l-3.500 3.500 3.500 3.500" fill="none" stroke="#505050" stroke-width="1.700"/></svg>
<div class="a" style="left:56px;top:589.500px;width:20px;height:15.500px;background:#cdcdcd"></div>
<svg class="a" style="left:102px;top:593px" width="6" height="9" viewBox="0 0 6 9" ><path d="M1 1l3.500 3.500-3.500 3.500" fill="none" stroke="#505050" stroke-width="1.700"/></svg>
<div class="a" style="left:26px;top:106px;width:1px;height:500px;background:#c9c9c9"></div>
<div class="a" style="left:130px;top:84px;width:1px;height:523px;background:#b4b4b4"></div>
<div class="a" style="left:26px;top:606px;width:937px;height:1px;background:#b4b4b4"></div>
<div class="a" style="left:134px;top:84px;width:827px;height:24px;background:#fff"></div>
<div class="a" style="left:142px;top:87px;width:262px;height:22px;background:#fb5a77;border:1px solid #e4879a;border-bottom:none"></div>
<div class="t" style="left:168px;top:90px;font-size:12px;font-weight:bold;color:#fff;letter-spacing:0px">sys@Oracle v12.1.0.2.0 [Untitled 24]*</div>
<svg class="a" style="left:148px;top:89px" width="17" height="16" viewBox="0 0 17 16" ><rect x="2.500" y="0.500" width="12" height="10" fill="#e9f0f8" stroke="#7f95b5"/><rect x="2" y="0" width="13" height="3" fill="#4a8fd8"/>
<rect x="0.500" y="3.500" width="13" height="11" fill="#f4f7fb" stroke="#7f95b5"/><rect x="0" y="3" width="14" height="3" fill="#5b9be0"/>
<circle cx="4.500" cy="10.500" r="3" fill="#e0a93a" stroke="#a87816" stroke-width="1"/><circle cx="4.500" cy="10.500" r="1" fill="#fff"/>
<circle cx="10.500" cy="10" r="3" fill="#dbe9f6" stroke="#8a98a8" stroke-width="1.100"/><path d="M12.800 12.300l3 3" stroke="#777" stroke-width="1.600"/></svg>
<svg class="a" style="left:389px;top:93px" width="9" height="9" viewBox="0 0 9 9" ><path d="M1 1l7 7M8 1l-7 7" stroke="#111" stroke-width="1.900"/></svg>
<svg class="a" style="left:911px;top:91px" width="7" height="10" viewBox="0 0 7 10" ><path d="M6 0.800v8.400l-5-4.200z" fill="none" stroke="#111" stroke-width="1.100"/></svg>
<svg class="a" style="left:929px;top:91px" width="7" height="10" viewBox="0 0 7 10" ><path d="M1 0.800v8.400l5-4.200z" fill="none" stroke="#111" stroke-width="1.100"/></svg>
<svg class="a" style="left:942px;top:91px" width="10" height="11" viewBox="0 0 10 11" ><rect x="0.600" y="0.600" width="8" height="9.400" fill="#fff" stroke="#111" stroke-width="1.200"/><path d="M2.500 3.500h4.200M2.500 5.500h4.200M2.500 7.500h4.200" stroke="#111" stroke-width="1"/></svg>
<div class="a" style="left:134px;top:108px;width:825.500px;height:494.500px;border:2px solid #fb5a77;background:#f0f0f0"></div>
<div class="a" style="left:136px;top:110px;width:821.500px;height:490.500px;border:1px solid #b9b9b9;border-right-color:#fafafa;border-bottom-color:#fafafa;background:#f0f0f0"></div>
<svg class="a" style="left:143px;top:116px" width="12" height="16" viewBox="0 0 12 16" ><path d="M0.500 0.500h7.500l3.500 3.500v11.500h-11z" fill="#fff" stroke="#8f8f8f"/><path d="M8 0.500v3.500h3.500" fill="#eee" stroke="#8f8f8f"/><path d="M5.500 5.500v6M2.500 8.500h6" stroke="#2e9e44" stroke-width="1.500"/></svg>
<svg class="a" style="left:164px;top:117px" width="15" height="14" viewBox="0 0 15 14" ><path d="M0.500 13.500v-13h5l1.500 2h7.500v11z" fill="#fdf0c8" stroke="#c8955a"/><path d="M5.500 11l5-5M7 5.500h4v4" fill="none" stroke="#3b7fc9" stroke-width="1.300"/></svg>
<svg class="a" style="left:187px;top:117px" width="14" height="16" viewBox="0 0 14 16" ><path d="M0.500 0.500h12v12h-12z" fill="#e9e9e9" stroke="#8a8a8a"/><rect x="2.500" y="1" width="8" height="5" fill="#fff" stroke="#aaa" stroke-width=".6"/><rect x="0.500" y="7.500" width="12" height="5" fill="#3f86d2"/><rect x="3.500" y="9" width="5" height="3.500" fill="#fff"/></svg>
<svg class="a" style="left:209px;top:117px" width="14" height="16" viewBox="0 0 14 16" ><path d="M0.500 0.500h12v12h-12z" fill="#e9e9e9" stroke="#8a8a8a"/><rect x="2.500" y="1" width="8" height="5" fill="#fff" stroke="#aaa" stroke-width=".6"/><rect x="0.500" y="7.500" width="12" height="5" fill="#3f86d2"/><rect x="3.500" y="9" width="5" height="3.500" fill="#fff"/><path d="M5 14.500h2M8 14.500h2M11 14.500h2" stroke="#8e5bb5" stroke-width="1.600"/></svg>
<svg class="a" style="left:231px;top:117px" width="14" height="16" viewBox="0 0 14 16" ><path d="M0.500 0.500h12v12h-12z" fill="#e9e9e9" stroke="#8a8a8a"/><rect x="2.500" y="1" width="8" height="5" fill="#fff" stroke="#aaa" stroke-width=".6"/><rect x="0.500" y="7.500" width="12" height="5" fill="#3f86d2"/><rect x="3.500" y="9" width="5" height="3.500" fill="#fff"/><rect x="5.500" y="6.500" width="8" height="7.500" fill="#fff" stroke="#8a8a8a"/><rect x="5" y="6" width="9" height="2.500" fill="#8e5bb5"/><path d="M9.500 8.500v5.500M5 11.500h9" stroke="#aaa" stroke-width=".8"/></svg>
<div class="sep" style="left:250px;top:113px;height:21px"></div>
<svg class="a" style="left:257px;top:117px" width="15" height="14" viewBox="0 0 15 14" ><rect x="3" y="0" width="9" height="3" fill="#3f7fbf"/><rect x="0" y="3.500" width="15" height="7" rx="1" fill="#3f86d2"/><rect x="3" y="8" width="9" height="6" fill="#fff" stroke="#555" stroke-width=".8"/><path d="M5 10h5M5 12h3" stroke="#555" stroke-width=".8"/></svg>
<div class="sep" style="left:277px;top:113px;height:21px"></div>
<svg class="a" style="left:284px;top:116px" width="15" height="16" viewBox="0 0 15 16" ><rect x="0.800" y="0.800" width="11" height="12" fill="none" stroke="#3b8ad9" stroke-width="1.300" stroke-dasharray="3 2"/><path d="M8.500 6v9l2.300-2 1.500 3 1.300-.7-1.500-2.800h3z" fill="#fff" stroke="#666" stroke-width=".9"/></svg>
<svg class="a" style="left:306px;top:116px" width="15" height="16" viewBox="0 0 15 16" ><path d="M2 0l7 11M13 0l-7 11" stroke="#6b6b6b" stroke-width="1.600"/><circle cx="3" cy="12.500" r="2.400" fill="none" stroke="#3b7fc9" stroke-width="1.400"/><circle cx="12" cy="12.500" r="2.400" fill="none" stroke="#3b7fc9" stroke-width="1.400"/></svg>
<svg class="a" style="left:327px;top:116px" width="16" height="16" viewBox="0 0 16 16" ><path d="M0.500 0.500h6l2 2v8.500h-8z" fill="#fff" stroke="#999"/><path d="M2 4h4M2 6h4M2 8h4" stroke="#6fa8dc" stroke-width=".9"/><path d="M6.500 4.500h6l3 3v8h-9z" fill="#fff" stroke="#999"/><path d="M8.500 8.500h5M8.500 10.500h5M8.500 12.500h5" stroke="#4a8fd8" stroke-width="1"/></svg>
<svg class="a" style="left:350px;top:115px" width="16" height="17" viewBox="0 0 16 17" ><rect x="0.500" y="2.500" width="12" height="13" rx="1" fill="#c49464" stroke="#a87b4f"/><rect x="4" y="0.500" width="5" height="3.500" fill="#ddd" stroke="#888" stroke-width=".8"/><path d="M7.500 8.500h5l3 3v5h-8z" fill="#fff" stroke="#999"/><path d="M9.500 13h4M9.500 15h4" stroke="#4a8fd8" stroke-width=".9"/></svg>
<svg class="a" style="left:372px;top:117px" width="16" height="14" viewBox="0 0 16 14" ><path d="M1 4.500l5-4.500v3h3.500c3.500 0 5.500 2 5.500 5s-2 5-5 5h-2v-2.500h2c1.700 0 2.500-1 2.500-2.500s-1-2.500-2.500-2.500h-4v3z" fill="#b28bd1"/></svg>
<svg class="a" style="left:394px;top:117px" width="16" height="14" viewBox="0 0 16 14" ><path d="M15 4.500l-5-4.500v3h-3.500c-3.500 0-5.500 2-5.500 5s2 5 5 5h2v-2.500h-2c-1.700 0-2.500-1-2.500-2.500s1-2.500 2.500-2.500h4v3z" fill="#b28bd1"/></svg>
<div class="sep" style="left:414px;top:113px;height:21px"></div>
<svg class="a" style="left:422px;top:117px" width="15" height="16" viewBox="0 0 15 16" ><path d="M0.500 10v-9.500h8" fill="none" stroke="#c9a27c" stroke-width="1"/><path d="M2.500 12v-9.500h8" fill="none" stroke="#c9a27c" stroke-width="1"/><circle cx="8" cy="7.500" r="3.300" fill="#d7e6f3" stroke="#9a9a9a" stroke-width="1.200"/><path d="M10.500 10l3 3.500" stroke="#9a9a9a" stroke-width="1.800"/></svg>
<svg class="a" style="left:443px;top:117px" width="15" height="16" viewBox="0 0 15 16" ><path d="M0.500 10v-9.500h8" fill="none" stroke="#c9a27c" stroke-width="1"/><path d="M2.500 12v-9.500h8" fill="none" stroke="#c9a27c" stroke-width="1"/><circle cx="8" cy="7.500" r="3.300" fill="#d7e6f3" stroke="#9a9a9a" stroke-width="1.200"/><path d="M10.500 10l3 3.500" stroke="#9a9a9a" stroke-width="1.800"/><path d="M1 15l2.500-7 2.500 7M2 13h3" fill="none" stroke="#999" stroke-width="1"/></svg>
<div class="sep" style="left:463px;top:113px;height:21px"></div>
<div class="t" style="left:471px;top:117px;font-size:12px;font-weight:bold;color:#666">a</div>
<svg class="a" style="left:478px;top:117px" width="6" height="4" viewBox="0 0 6 4" ><path d="M0 0h6l-3 3.500z" fill="#3b7fc9"/></svg>
<div class="t" style="left:493px;top:118.500px;font-size:14px;color:#5a5a5a;transform:scaleX(1.15);transform-origin:0 0">A</div>
<svg class="a" style="left:500px;top:116px" width="6" height="4" viewBox="0 0 6 4" ><path d="M0 3.500h6l-3-3.500z" fill="#3b7fc9"/></svg>
<svg class="a" style="left:141px;top:138px" width="16" height="17" viewBox="0 0 16 17" ><path d="M4.500 1.500v10l5.500-5z" fill="#2eb135"/><path d="M9.500 1.500v10l6-5z" fill="#2eb135"/><circle cx="5" cy="11.500" r="3.600" fill="#f0f0f0" stroke="#858585" stroke-width="2.200" stroke-dasharray="1.700 1.100"/><circle cx="5" cy="11.500" r="3" fill="none" stroke="#858585" stroke-width="1.600"/></svg>
<svg class="a" style="left:167px;top:140px" width="8" height="13" viewBox="0 0 8 13" ><path d="M0.500 0v13l7-6.500z" fill="#2eb135"/></svg>
<svg class="a" style="left:186px;top:139px" width="16" height="15" viewBox="0 0 16 15" ><rect x="5.500" y="1.500" width="9" height="11" fill="#fff" stroke="#8a8a8a"/><path d="M4 1.500h11M3.500 12.500h9" stroke="#8a8a8a" stroke-width="1.500" stroke-linecap="round"/><path d="M8 4.500h5M8 6.500h5M8 8.500h5M8 10.500h5" stroke="#e1b04a" stroke-width="1"/><path d="M0.500 1v12l6.500-6z" fill="#2eb135"/></svg>
<svg class="a" style="left:208px;top:138px" width="16" height="16" viewBox="0 0 16 16" ><rect x="2.500" y="3.500" width="11" height="11" fill="#fff" stroke="#8a8a8a"/><rect x="2" y="3" width="12" height="2.500" fill="#4a8fd8"/><path d="M6.500 5v10M10.500 5v10M2 9h12M2 12h12" stroke="#aaa" stroke-width=".8"/><path d="M8.500 8l6-7 1.500 1.500-6 6.500z" fill="#3fae49"/><path d="M0.500 4v11l6-5.500z" fill="#2eb135"/></svg>
<svg class="a" style="left:230px;top:139px" width="15" height="15" viewBox="0 0 15 15" ><rect x="2.500" y="1.500" width="10" height="12" fill="#fff" stroke="#8a8a8a"/><rect x="2" y="1" width="11" height="2.500" fill="#4a8fd8"/><path d="M8.500 5.500h3M8.500 9h3M8.500 12.500h3" stroke="#555" stroke-width="2.200"/><path d="M8 4v9" stroke="#555" stroke-width=".8"/><path d="M0.500 3v11l6-5.500z" fill="#2eb135"/></svg>
<svg class="a" style="left:252px;top:140px" width="13" height="13" viewBox="0 0 13 13" ><circle cx="6.500" cy="6.500" r="6.200" fill="#a4a4a4"/><path d="M4 4l5 5M9 4l-5 5" stroke="#d4d4d4" stroke-width="1.600"/></svg>
<div class="sep" style="left:272px;top:136px;height:23px"></div>
<div class="a" style="left:275px;top:135px;width:22px;height:24px;border:1px solid #3399ff;background:#cce4fb"></div>
<svg class="a" style="left:279px;top:139px" width="14" height="16" viewBox="0 0 14 16" ><path d="M1 2.500v10c0 1.400 2.500 2.500 5.500 2.500s5.500-1.100 5.500-2.500v-10" fill="#4c8fc9"/><ellipse cx="6.500" cy="2.500" rx="5.500" ry="2.300" fill="#7fb2e0"/><path d="M1 6c1 1.400 3 2 5.500 2s4.500-.6 5.500-2M1 9.500c1 1.400 3 2 5.500 2s4.500-.6 5.500-2" fill="none" stroke="#cfe2f3" stroke-width="1"/><path d="M7 4.500c3-1.500 5.500 0 5.500 2l1.500-.3-2 3-2.500-2 1.500-.3c0-1-1.500-1.800-3-1z" fill="#f2b632" stroke="#c98d12" stroke-width=".5"/><path d="M12 12c-3 1.500-5.500 0-5.500-2l-1.500.3 2-3 2.500 2-1.500.3c0 1 1.500 1.800 3 1z" fill="#f2b632" stroke="#c98d12" stroke-width=".5"/></svg>
<svg class="a" style="left:301px;top:139px" width="14" height="15" viewBox="0 0 14 15" ><rect x="1.500" y="0.500" width="12" height="14" rx="2" fill="#9a9a9a"/><path d="M3 7.500h5c2 0 3-1 3-2.500M3 7.500l2.500-2.500M3 7.500l2.500 2.500" fill="none" stroke="#b9b9b9" stroke-width="1.400"/><path d="M0 7.500l3-2v4z" fill="#8a8a8a"/></svg>
<svg class="a" style="left:323px;top:139px" width="14" height="15" viewBox="0 0 14 15" ><rect x="1.500" y="0.500" width="12" height="14" rx="2" fill="#9a9a9a"/><path d="M11 5h-5c-2 0-3 1-3 2.500s1 2.500 3 2.500h5M4 10l-2-2.500" fill="none" stroke="#b9b9b9" stroke-width="1.400"/></svg>
<svg class="a" style="left:344px;top:138px" width="17" height="17" viewBox="0 0 17 17" ><path d="M10 4l4-4M12.500 6.500l4-4" stroke="#555" stroke-width="1.300"/><path d="M5.500 6l3-2.500 5 5-2.500 3q-3 2-5.500-.5t0-5z" fill="#f0ad4e" stroke="#d68f2c" stroke-width=".7"/><path d="M5 12l-4.500 4.500" stroke="#444" stroke-width="1.600"/><path d="M3 12.500h5v-2.500l4 4-4 4v-2.500h-5z" fill="#f7c948" stroke="#c98d12" stroke-width=".6" transform="translate(0,-2.500)"/></svg>
<svg class="a" style="left:366px;top:138px" width="17" height="17" viewBox="0 0 17 17" ><rect x="1" y="1" width="8" height="15" fill="#8d8d8d"/><rect x="1" y="1" width="8" height="2" fill="#666"/><rect x="1" y="5" width="8" height="1.500" fill="#cfcfcf"/><path d="M11 4l4-4M13.500 6.500l3.500-3.500" stroke="#555" stroke-width="1.300"/><path d="M7 6l3-2.500 5 5-2.500 3q-3 2-5.500-.5t0-5z" fill="#f0ad4e" stroke="#d68f2c" stroke-width=".7"/><circle cx="4.500" cy="10.500" r="3.600" fill="#e35b5b" stroke="#c23b3b" stroke-width=".6"/><rect x="2.300" y="9.800" width="4.400" height="1.400" fill="#fff"/></svg>
<svg class="a" style="left:388px;top:138px" width="14" height="17" viewBox="0 0 14 17" ><rect x="5" y="1" width="9" height="15" fill="#8d8d8d"/><rect x="5" y="1" width="9" height="2" fill="#555"/><rect x="5" y="5" width="9" height="1.500" fill="#cfcfcf"/><rect x="5" y="8.500" width="9" height="1.500" fill="#cfcfcf"/><rect x="11" y="12.500" width="1.500" height="1.500" fill="#39d353"/><path d="M9 9.500h-4v-2.500l-4.500 4 4.500 4v-2.500h4z" fill="#f7c948" stroke="#c98d12" stroke-width=".6"/></svg>
<div class="sep" style="left:409px;top:136px;height:23px"></div>
<div class="a" style="left:412px;top:135px;width:22px;height:24px;border:1px solid #3399ff;background:#cce4fb"></div>
<svg class="a" style="left:415px;top:138px" width="17" height="18" viewBox="0 0 17 18" ><rect x="4.500" y="0.500" width="11" height="10" fill="#f6ecdb" stroke="#9b7b55"/><path d="M8 1v9.500M12 1v9.500" stroke="#9b7b55" stroke-width="1"/><path d="M5.500 3h1.500M5.500 5.500h1.500M5.500 8h1.500M9.500 3h1.500M9.500 5.500h1.500M9.500 8h1.500M13.500 3h1.500M13.500 5.500h1.500" stroke="#6b5434" stroke-width="1.200"/><rect x="0.500" y="6.500" width="10" height="10" fill="#fff" stroke="#b8c4d2"/><rect x="0" y="6" width="4" height="2.500" fill="#5b9be0"/><path d="M4 8.500v8M7.500 11v5.500M0 11h11M0 14h11" stroke="#c3ccd6" stroke-width="1"/></svg>
<svg class="a" style="left:437px;top:138px" width="17" height="18" viewBox="0 0 17 18" ><rect x="4.500" y="0.500" width="11" height="10" fill="#f6ecdb" stroke="#9b7b55"/><path d="M8 1v9.500M12 1v9.500" stroke="#9b7b55" stroke-width="1"/><path d="M5.500 3h1.500M5.500 5.500h1.500M5.500 8h1.500M9.500 3h1.500M9.500 5.500h1.500M9.500 8h1.500M13.500 3h1.500M13.500 5.500h1.500" stroke="#6b5434" stroke-width="1.200"/><path d="M2.500 6.500v4.500h5v3" fill="none" stroke="#d29a2e" stroke-width="1.300"/><rect x="0" y="4.500" width="5" height="3" fill="#f0ad4e"/><rect x="5" y="13.500" width="5" height="3" fill="#f0ad4e"/><path d="M7.500 11h6v3" fill="none" stroke="#d29a2e" stroke-width="1.300"/></svg>
<svg class="a" style="left:460px;top:138px" width="16" height="18" viewBox="0 0 16 18" ><rect x="4" y="0.500" width="12" height="4" fill="#f2b632"/><path d="M10 4.500v4h5M10 8.500v4.500h3" fill="none" stroke="#d29a2e" stroke-width="1.300"/><rect x="12" y="7" width="4" height="3" fill="#f0ad4e"/><rect x="10" y="11.500" width="4" height="3" fill="#f0ad4e"/><path d="M1 9c0-3 3-4.500 5.500-3l.8-1.500 1.500 4-4 .3.800-1.400c-1.500-.8-3 .2-3 1.600z" fill="#3fae49"/><path d="M9 12c0 3-3 4.500-5.500 3l-.8 1.500-1.500-4 4-.3-.8 1.400c1.500.8 3-.2 3-1.600z" fill="#3fae49"/></svg>
<div class="sep" style="left:480px;top:136px;height:23px"></div>
<svg class="a" style="left:486px;top:138px" width="16" height="17" viewBox="0 0 16 17" ><rect x="3.500" y="1.500" width="9" height="12" fill="#fff" stroke="#8a8a8a"/><path d="M2.500 1.500h11M1.500 13.500h9" stroke="#8a8a8a" stroke-width="1.600" stroke-linecap="round"/><rect x="5.500" y="7.500" width="10" height="8" fill="#fff" stroke="#777"/><path d="M7 10h2M7 13h2" stroke="#3fae49" stroke-width="1.500"/><path d="M10.500 10h4M10.500 13h4" stroke="#4a8fd8" stroke-width="1.500"/></svg>
<svg class="a" style="left:508px;top:137px" width="17" height="18" viewBox="0 0 17 18" ><rect x="0.500" y="6.500" width="11" height="10" fill="#fff" stroke="#3d8b57"/><rect x="0" y="6" width="12" height="3" fill="#3d8b57"/><path d="M3 11.500v3.500M5.500 11.500h3l-3 3.500h3" fill="none" stroke="#3d8b57" stroke-width="1.200"/><circle cx="11.500" cy="5.500" r="4.700" fill="#eef6f0" stroke="#4c9a68" stroke-width="1.100"/><path d="M11.500 2.500v3.200l2.200 1.500" fill="none" stroke="#3d8b57" stroke-width="1.100"/></svg>
<div class="sep" style="left:529px;top:136px;height:23px"></div>
<div class="a" style="left:534px;top:138px;width:86px;height:22px;background:#fff;border:1px solid #ababab"></div>
<div class="t" style="left:539.6px;top:143px;font-size:11px;transform:scaleX(0.957);transform-origin:0 0;color:#8c8c8c;">Max Results</div>
<div class="t" style="left:144.8px;top:166px;font-size:11px;transform:scaleX(0.971);transform-origin:0 0;">Database:</div>
<div class="a" style="left:202px;top:162px;width:98px;height:21px;background:#fff;border:1px solid #ababab"></div><div class="t" style="left:205.5px;top:166px;font-size:11px;transform:scaleX(0.830);transform-origin:0 0;">ORCL</div><svg class="a" style="left:287px;top:170px" width="8" height="6" viewBox="0 0 8 6" ><path d="M0.800 0.800l3.200 3.700 3.200-3.700" fill="none" stroke="#444" stroke-width="1.500"/></svg>
<div class="t" style="left:313.8px;top:166px;font-size:11px;transform:scaleX(0.910);transform-origin:0 0;">Schema:</div>
<div class="a" style="left:362px;top:162px;width:160px;height:21px;background:#fff;border:1px solid #ababab"></div><div class="t" style="left:365.5px;top:166px;font-size:11px;transform:scaleX(0.830);transform-origin:0 0;">SYS</div><svg class="a" style="left:509px;top:170px" width="8" height="6" viewBox="0 0 8 6" ><path d="M0.800 0.800l3.200 3.700 3.200-3.700" fill="none" stroke="#444" stroke-width="1.500"/></svg>
<div class="t" style="left:535.6px;top:166px;font-size:11px;transform:scaleX(0.950);transform-origin:0 0;">Username:</div>
<div class="t" style="left:594.4px;top:166px;font-size:11px;transform:scaleX(0.945);transform-origin:0 0;">sys</div>
<div class="t" style="left:624.8px;top:166px;font-size:11px;transform:scaleX(0.914);transform-origin:0 0;">AUDSID:</div>
<div class="t" style="left:674px;top:166px;font-size:11px;transform:scaleX(0.961);transform-origin:0 0;">4294967295</div>
<div class="a" style="left:138px;top:187px;width:818px;height:61px;background:#fff;border-top:1px solid #a9a9a9;border-bottom:1px solid #c8c8c8"></div>
<div class="a" style="left:138px;top:188px;width:47px;height:59px;background:#f0f0f0;border-right:1px solid #d6d6d6"></div>
<div class="a" style="left:138px;top:208px;width:818px;height:17px;background:#fdfde1"></div>
<div class="a" style="left:184px;top:208px;width:1px;height:17px;background:#e4e4cc"></div>
<div class="a" style="left:750px;top:187px;width:1px;height:60px;background:#e6e6e6"></div>
<div class="t" style="left:143px;top:192.500px;font-size:12px;color:#8b1a1a">1</div>
<div class="t" style="left:143px;top:210.500px;font-size:12px;color:#8b1a1a">2</div>
<div class="t mono" style="left:190px;top:193px;font-size:11.65px;color:#333"><b style="color:#0a16f0">SELECT</b> * <b style="color:#0a16f0">FROM</b> GV_$ASM_USER, GOLDENGATE$_PRIVILEGES, <span style="color:#e0141e">"_ALL_INSTANTIATION_DDL"</span></div>
<div class="t mono" style="left:190px;top:210.500px;font-size:11.65px;color:#6aa121">GO</div>
<div class="a" style="left:949px;top:190px;width:7px;height:38px;background:rgba(150,150,150,.5)"></div>
<div class="a" style="left:138px;top:248px;width:818px;height:21px;background:#f0f0f0;border:1px solid #c4c4c4;border-top:none"></div>
<div class="t" style="left:147px;top:251.500px;font-size:11px">[5/11/2020 10:43:31 AM] Script executed - No Errors [Time: 2s]</div>
<div class="t" style="left:831.7px;top:251.5px;font-size:11px;transform:scaleX(1.053);transform-origin:0 0;">2:3</div>
<div class="t" style="left:868.4px;top:251.5px;font-size:11px;transform:scaleX(0.877);transform-origin:0 0;">CRLF</div>
<div class="t" style="left:913px;top:251.5px;font-size:11px;transform:scaleX(0.943);transform-origin:0 0;">UTF-8</div>
<svg class="a" style="left:895px;top:255px" width="5" height="8" viewBox="0 0 5 8" ><path d="M0 3h5l-2.500-3zM0 5h5l-2.500 3z" fill="#333"/></svg>
<svg class="a" style="left:944px;top:255px" width="5" height="8" viewBox="0 0 5 8" ><path d="M0 3h5l-2.500-3zM0 5h5l-2.500 3z" fill="#333"/></svg>
<svg class="a" style="left:541px;top:273px" width="14" height="3" viewBox="0 0 14 3" ><path d="M0 1.500h14" stroke="#aaa" stroke-width="3" stroke-dasharray="1 1"/></svg>
<div class="a" style="left:138px;top:278px;width:819px;height:297px;background:#fff;border-top:2px solid #9f9f9f;border-left:1px solid #8c8c8c;border-right:2px solid #8f8f8f"></div>
<div class="a" style="left:139px;top:280px;width:816px;height:26px;background:linear-gradient(#fff 60%,#f3f7fc);border-bottom:1px solid #dbe6f3"></div>
<div class="hd" style="left:143.5px;transform:scaleX(.975);transform-origin:0 0">Operation</div>
<div class="hd" style="left:331px;transform:scaleX(.975);transform-origin:0 0">Node Cost</div>
<div class="cs" style="left:326px;background:#dfe9f5"></div>
<div class="hd" style="left:397px;transform:scaleX(.975);transform-origin:0 0">IO Cost</div>
<div class="cs" style="left:391px;background:#dfe9f5"></div>
<div class="hd" style="left:466px;transform:scaleX(.975);transform-origin:0 0">CPU Cost</div>
<div class="cs" style="left:460px;background:#dfe9f5"></div>
<div class="hd" style="left:533px;transform:scaleX(.975);transform-origin:0 0">Cardinality</div>
<div class="cs" style="left:528px;background:#dfe9f5"></div>
<div class="hd" style="left:599px;transform:scaleX(.975);transform-origin:0 0">Bytes</div>
<div class="cs" style="left:595px;background:#dfe9f5"></div>
<div class="hd" style="left:700px;transform:scaleX(.975);transform-origin:0 0">Position</div>
<div class="cs" style="left:696px;background:#dfe9f5"></div>
<div class="hd" style="left:769px;transform:scaleX(.975);transform-origin:0 0">Obj Owner</div>
<div class="cs" style="left:764px;background:#dfe9f5"></div>
<div class="hd" style="left:869px;transform:scaleX(.975);transform-origin:0 0">Obj Name</div>
<div class="cs" style="left:864px;background:#dfe9f5"></div>
<div class="a" style="left:139px;top:327px;width:187px;height:18px;background:#ff5a35"></div>
<div class="a" style="left:139px;top:422px;width:187px;height:19px;background:#00f600"></div>
<div class="a" style="left:139px;top:441px;width:187px;height:18px;background:#00a0fa"></div>
<div class="a" style="left:139px;top:441px;width:187px;height:1px;background:#7fe07f"></div>
<div class="a" style="left:162px;top:322px;width:0;height:8px;border-left:1px dotted #888"></div>
<div class="a" style="left:178px;top:341px;width:0;height:85px;border-left:1px dotted #888"></div>
<div class="a" style="left:194px;top:360px;width:0;height:28px;border-left:1px dotted #888"></div>
<div class="a" style="left:195px;top:374px;width:7px;height:0;border-top:1px dotted #888"></div>
<div class="a" style="left:210px;top:398px;width:0;height:14px;border-left:1px dotted #888"></div>
<div class="a" style="left:211px;top:412px;width:7px;height:0;border-top:1px dotted #888"></div>
<div class="a" style="left:194px;top:436px;width:0;height:14px;border-left:1px dotted #888"></div>
<div class="a" style="left:195px;top:450px;width:7px;height:0;border-top:1px dotted #888"></div>
<div class="a" style="left:151px;top:317px;width:3px;height:0;border-top:1px dotted #888"></div>
<div class="a" style="left:167px;top:336px;width:3px;height:0;border-top:1px dotted #888"></div>
<div class="a" style="left:183px;top:355px;width:3px;height:0;border-top:1px dotted #888"></div>
<div class="a" style="left:199px;top:393px;width:3px;height:0;border-top:1px dotted #888"></div>
<div class="a" style="left:183px;top:431px;width:3px;height:0;border-top:1px dotted #888"></div>
<svg class="a" style="left:142px;top:312.5px" width="9" height="9" viewBox="0 0 9 9" ><rect x="0.500" y="0.500" width="8" height="8" rx="1" fill="#f4f6f9" stroke="#9aa3ad"/><path d="M2 4.500h5" stroke="#2f4fa0" stroke-width="1.300"/></svg>
<svg class="a" style="left:156.5px;top:308px" width="15" height="17" viewBox="0 0 15 17" ><rect x="3.500" y="1.500" width="10" height="14" fill="#fff" stroke="#8a8a8a"/><path d="M2.500 1.500h12M1.500 15.500h10" stroke="#8a8a8a" stroke-width="1.600" stroke-linecap="round"/><rect x="3" y="0" width="11" height="2.500" fill="#5b9be0"/><path d="M5.500 4.500h6M5.500 6.500h6M5.500 8.500h6M5.500 10.500h6M5.500 12.500h6" stroke="#4a8fd8" stroke-width="1"/><path d="M2.500 3v12" stroke="#777" stroke-width="1.500"/></svg>
<div class="l" style="left:176.5px;top:310.3px;letter-spacing:-.12px">SELECT STATEMENT</div>
<svg class="a" style="left:158px;top:331.5px" width="9" height="9" viewBox="0 0 9 9" ><rect x="0.500" y="0.500" width="8" height="8" rx="1" fill="#f4f6f9" stroke="#9aa3ad"/><path d="M2 4.500h5" stroke="#2f4fa0" stroke-width="1.300"/></svg>
<svg class="a" style="left:171.5px;top:327px" width="17" height="17" viewBox="0 0 17 17" ><rect x="8.500" y="4.500" width="8" height="9" fill="#fff" stroke="#a9b4c0"/><rect x="8" y="4" width="9" height="2.200" fill="#6aa9e6"/><rect x="1.500" y="1.500" width="12" height="10" fill="#fff" stroke="#a9b4c0"/><rect x="1" y="1" width="13" height="2.600" fill="#5b9be0"/><path d="M5.500 4v8M9.500 4v8M1 6.500h13M1 9h13" stroke="#c3cbd4" stroke-width=".9"/><path d="M6.500 5v11.500M0.700 10.700h11.600" stroke="#3da544" stroke-width="4.400"/><path d="M6.500 6v9.500M1.700 10.700h9.600" stroke="#72d477" stroke-width="2.400"/></svg>
<div class="l" style="left:192px;top:329.4px;letter-spacing:-.12px">MERGE JOIN (CARTE...</div>
<svg class="a" style="left:174px;top:350.5px" width="9" height="9" viewBox="0 0 9 9" ><rect x="0.500" y="0.500" width="8" height="8" rx="1" fill="#f4f6f9" stroke="#9aa3ad"/><path d="M2 4.500h5" stroke="#2f4fa0" stroke-width="1.300"/></svg>
<svg class="a" style="left:187.5px;top:346px" width="17" height="17" viewBox="0 0 17 17" ><rect x="8.500" y="4.500" width="8" height="9" fill="#fff" stroke="#a9b4c0"/><rect x="8" y="4" width="9" height="2.200" fill="#6aa9e6"/><rect x="1.500" y="1.500" width="12" height="10" fill="#fff" stroke="#a9b4c0"/><rect x="1" y="1" width="13" height="2.600" fill="#5b9be0"/><path d="M5.500 4v8M9.500 4v8M1 6.500h13M1 9h13" stroke="#c3cbd4" stroke-width=".9"/><path d="M6.500 5v11.500M0.700 10.700h11.600" stroke="#3da544" stroke-width="4.400"/><path d="M6.500 6v9.500M1.700 10.700h9.600" stroke="#72d477" stroke-width="2.400"/></svg>
<div class="l" style="left:208px;top:348.6px;letter-spacing:-.12px">MERGE JOIN (CAR...</div>
<svg class="a" style="left:205px;top:368px" width="14" height="12" viewBox="0 0 14 12" ><path d="M1 11v-10h5l1.200 1.800h5.800v8.200z" fill="#fff" stroke="#b98a55" stroke-width="1.800"/></svg>
<div class="l" style="left:224px;top:367.7px;letter-spacing:-.12px">FIXED TABLE (F...</div>
<svg class="a" style="left:190.5px;top:389.5px" width="9" height="9" viewBox="0 0 9 9" ><rect x="0.500" y="0.500" width="8" height="8" rx="1" fill="#f4f6f9" stroke="#9aa3ad"/><path d="M2 4.500h5" stroke="#2f4fa0" stroke-width="1.300"/></svg>
<svg class="a" style="left:205px;top:386px" width="15" height="16" viewBox="0 0 15 16" ><rect x="0.500" y="1.500" width="11" height="12" fill="#fff" stroke="#9aa7b5"/><rect x="0" y="1" width="12" height="3" fill="#5b9be0"/><path d="M4 4v10M8 4v10M0 7.500h12M0 10.500h12" stroke="#a9b3be" stroke-width=".9"/><path d="M8.500 6.500v7c0 1 1.300 1.800 3 1.800s3-.8 3-1.800v-7" fill="#4c7fc4"/><ellipse cx="11.500" cy="6.500" rx="3" ry="1.700" fill="#8ab4e6" stroke="#3a6cb0" stroke-width=".6"/><path d="M10 9v5" stroke="#9cc0ea" stroke-width="1"/></svg>
<div class="l" style="left:224px;top:386.9px;letter-spacing:-.12px">BUFFER (SORT)</div>
<svg class="a" style="left:221px;top:405px" width="15" height="16" viewBox="0 0 15 16" ><rect x="0.500" y="1.500" width="11" height="11" fill="#fff" stroke="#9aa7b5"/><rect x="0" y="1" width="12" height="3" fill="#6ea6e2"/><path d="M4 4v9M8 4v9M0 7.500h12M0 10.500h12" stroke="#a9b3be" stroke-width=".9"/><path d="M8.500 6h4v4h2.500l-4.500 5.500-4.500-5.500h2.500z" fill="#f7c948" stroke="#d19a1e" stroke-width=".8"/></svg>
<div class="l" style="left:241px;top:406.1px;letter-spacing:-.12px">TABLE ACCE...</div>
<svg class="a" style="left:174.5px;top:427.5px" width="9" height="9" viewBox="0 0 9 9" ><rect x="0.500" y="0.500" width="8" height="8" rx="1" fill="#f4f6f9" stroke="#9aa3ad"/><path d="M2 4.500h5" stroke="#2f4fa0" stroke-width="1.300"/></svg>
<svg class="a" style="left:189px;top:424px" width="15" height="16" viewBox="0 0 15 16" ><rect x="0.500" y="1.500" width="11" height="12" fill="#fff" stroke="#9aa7b5"/><rect x="0" y="1" width="12" height="3" fill="#5b9be0"/><path d="M4 4v10M8 4v10M0 7.500h12M0 10.500h12" stroke="#a9b3be" stroke-width=".9"/><path d="M8.500 6.500v7c0 1 1.300 1.800 3 1.800s3-.8 3-1.800v-7" fill="#4c7fc4"/><ellipse cx="11.500" cy="6.500" rx="3" ry="1.700" fill="#8ab4e6" stroke="#3a6cb0" stroke-width=".6"/><path d="M10 9v5" stroke="#9cc0ea" stroke-width="1"/></svg>
<div class="l" style="left:208px;top:425.2px;letter-spacing:-.12px">BUFFER (SORT)</div>
<svg class="a" style="left:205px;top:443px" width="15" height="16" viewBox="0 0 15 16" ><rect x="0.500" y="1.500" width="11" height="11" fill="#fff" stroke="#9aa7b5"/><rect x="0" y="1" width="12" height="3" fill="#6ea6e2"/><path d="M4 4v9M8 4v9M0 7.500h12M0 10.500h12" stroke="#a9b3be" stroke-width=".9"/><path d="M8.500 6h4v4h2.500l-4.500 5.500-4.500-5.500h2.500z" fill="#f7c948" stroke="#d19a1e" stroke-width=".8"/></svg>
<div class="l" style="left:224px;top:444.4px;letter-spacing:-.12px">TABLE ACCESS ...</div>
<div class="n" style="left:330px;width:60px;top:310.3px">4</div>
<div class="n" style="left:400px;width:60px;top:310.3px">4</div>
<div class="n" style="left:467px;width:60px;top:310.3px">14243</div>
<div class="n" style="left:534px;width:60px;top:310.3px">1</div>
<div class="n" style="left:633px;width:60px;top:310.3px">8598</div>
<div class="n" style="left:703px;width:60px;top:310.3px">4</div>
<div class="n" style="left:330px;width:60px;top:329.4px">4</div>
<div class="n" style="left:400px;width:60px;top:329.4px">4</div>
<div class="n" style="left:467px;width:60px;top:329.4px">14243</div>
<div class="n" style="left:534px;width:60px;top:329.4px">1</div>
<div class="n" style="left:633px;width:60px;top:329.4px">8598</div>
<div class="n" style="left:703px;width:60px;top:329.4px">1</div>
<div class="n" style="left:330px;width:60px;top:348.6px">2</div>
<div class="n" style="left:400px;width:60px;top:348.6px">2</div>
<div class="n" style="left:467px;width:60px;top:348.6px">7121</div>
<div class="n" style="left:534px;width:60px;top:348.6px">1</div>
<div class="n" style="left:633px;width:60px;top:348.6px">6557</div>
<div class="n" style="left:703px;width:60px;top:348.6px">1</div>
<div class="n" style="left:534px;width:60px;top:367.7px">1</div>
<div class="n" style="left:633px;width:60px;top:367.7px">328</div>
<div class="n" style="left:703px;width:60px;top:367.7px">1</div>
<div class="l" style="left:766px;top:367.7px">SYS</div>
<div class="l" style="left:866px;top:367.7px;letter-spacing:-.1px">X$KFZUDR</div>
<div class="n" style="left:330px;width:60px;top:386.9px">2</div>
<div class="n" style="left:400px;width:60px;top:386.9px">2</div>
<div class="n" style="left:467px;width:60px;top:386.9px">7121</div>
<div class="n" style="left:534px;width:60px;top:386.9px">1</div>
<div class="n" style="left:633px;width:60px;top:386.9px">6229</div>
<div class="n" style="left:703px;width:60px;top:386.9px">2</div>
<div class="n" style="left:330px;width:60px;top:406.1px">2</div>
<div class="n" style="left:400px;width:60px;top:406.1px">2</div>
<div class="n" style="left:467px;width:60px;top:406.1px">7121</div>
<div class="n" style="left:534px;width:60px;top:406.1px">1</div>
<div class="n" style="left:633px;width:60px;top:406.1px">6229</div>
<div class="n" style="left:703px;width:60px;top:406.1px">1</div>
<div class="l" style="left:766px;top:406.1px">SYS</div>
<div class="l" style="left:866px;top:406.1px;letter-spacing:-.1px">GOLDENGATE..</div>
<div class="n" style="left:330px;width:60px;top:425.2px">2</div>
<div class="n" style="left:400px;width:60px;top:425.2px">2</div>
<div class="n" style="left:467px;width:60px;top:425.2px">7121</div>
<div class="n" style="left:534px;width:60px;top:425.2px">1</div>
<div class="n" style="left:633px;width:60px;top:425.2px">2041</div>
<div class="n" style="left:703px;width:60px;top:425.2px">2</div>
<div class="n" style="left:330px;width:60px;top:444.4px">2</div>
<div class="n" style="left:400px;width:60px;top:444.4px">2</div>
<div class="n" style="left:467px;width:60px;top:444.4px">7121</div>
<div class="n" style="left:534px;width:60px;top:444.4px">1</div>
<div class="n" style="left:633px;width:60px;top:444.4px">2041</div>
<div class="n" style="left:703px;width:60px;top:444.4px">1</div>
<div class="l" style="left:766px;top:444.4px">SYSTEM</div>
<div class="l" style="left:866px;top:444.4px;letter-spacing:-.1px">REPCAT$_INS..</div>
<svg class="a" style="left:883px;top:327px" width="12" height="19" viewBox="0 0 12 19" ><path d="M1 1v14l3.300-3 2.300 5.500 2-.9-2.300-5.300h4.400z" fill="#fff" stroke="#111" stroke-width="1"/></svg>
<div class="a" style="left:139px;top:557px;width:816px;height:17px;background:#f0f0f0"></div>
<svg class="a" style="left:332px;top:561px" width="6" height="9" viewBox="0 0 6 9" ><path d="M5 1l-3.500 3.500 3.500 3.500" fill="none" stroke="#404040" stroke-width="1.800"/></svg>
<div class="a" style="left:345px;top:557px;width:178px;height:17px;background:#cdcdcd"></div>
<svg class="a" style="left:944px;top:561px" width="6" height="9" viewBox="0 0 6 9" ><path d="M1 1l3.500 3.500-3.500 3.500" fill="none" stroke="#404040" stroke-width="1.800"/></svg>
<div class="a" style="left:138px;top:574px;width:819px;height:2px;background:#9f9f9f"></div>
<div class="a" style="left:510px;top:576px;width:110px;height:23px;background:#e6e6e6;border:1px solid #a8a8a8;border-top:none"></div>
<svg class="a" style="left:146px;top:581px" width="16" height="15" viewBox="0 0 16 15" ><rect x="0.500" y="0.500" width="15" height="14" fill="#fdfdfd" stroke="#8d99a8"/><rect x="0.500" y="0.500" width="15" height="2.400" fill="#4577b0"/><path d="M3.500 5v8M6.500 5v8M9.500 5v8M12.500 5v8" stroke="#666" stroke-width="1.300"/></svg>
<div class="bt" style="left:165.3px;top:581.5px;font-size:11px;transform:scaleX(1.100);transform-origin:0 0;">Text</div>
<div class="bs" style="left:202px"></div>
<svg class="a" style="left:207px;top:581px" width="16" height="15" viewBox="0 0 16 15" ><rect x="0.500" y="0.500" width="15" height="14" fill="#fdfdfd" stroke="#8d99a8"/><rect x="0.500" y="0.500" width="15" height="2.400" fill="#4577b0"/><rect x="4.500" y="4.500" width="10" height="10" fill="#f1dfc4" stroke="#b98a55"/><rect x="11" y="6" width="2" height="2" fill="#a8743c"/><rect x="11" y="10" width="2" height="2" fill="#a8743c"/></svg>
<div class="bt" style="left:226.9px;top:581.5px;font-size:11px;transform:scaleX(1.023);transform-origin:0 0;">Text History</div>
<div class="bs" style="left:300px"></div>
<svg class="a" style="left:306px;top:581px" width="16" height="15" viewBox="0 0 16 15" ><rect x="0.500" y="0.500" width="15" height="14" fill="#fff" stroke="#777"/><path d="M0 6.500h16M0 10.500h16M5.500 2v13M10.500 2v13" stroke="#666" stroke-width="1.200"/><rect x="0.500" y="0.500" width="15" height="2.400" fill="#4577b0"/></svg>
<div class="bt" style="left:325.3px;top:581.5px;font-size:11px;transform:scaleX(0.924);transform-origin:0 0;">Grid</div>
<div class="bs" style="left:360px"></div>
<svg class="a" style="left:366px;top:581px" width="16" height="15" viewBox="0 0 16 15" ><rect x="0.500" y="0.500" width="15" height="14" fill="#fdfdfd" stroke="#8d99a8"/><rect x="0.500" y="0.500" width="15" height="2.400" fill="#4577b0"/><rect x="3" y="5" width="3" height="3" fill="none" stroke="#555"/><rect x="8" y="5" width="5" height="3" fill="none" stroke="#555"/><path d="M4.500 9.500v4M9 13v-3.500M11.500 9.500v3.500" stroke="#444" stroke-width="1.200"/></svg>
<div class="bt" style="left:385px;top:581.5px;font-size:11px;transform:scaleX(0.957);transform-origin:0 0;">Pivot Grid</div>
<div class="bs" style="left:445px"></div>
<svg class="a" style="left:452px;top:581px" width="16" height="15" viewBox="0 0 16 15" ><rect x="0.500" y="0.500" width="15" height="14" fill="#fdfdfd" stroke="#8d99a8"/><rect x="0.500" y="0.500" width="15" height="2.400" fill="#4577b0"/><path d="M3 6h3M3 9h3M3 12h3" stroke="#555" stroke-width="1.400"/><path d="M7.500 6h6M7.500 9h6M7.500 12h6" stroke="#888" stroke-width="1.400"/></svg>
<div class="bt" style="left:471.4px;top:581.5px;font-size:11px;transform:scaleX(0.931);transform-origin:0 0;">Form</div>
<svg class="a" style="left:516px;top:581px" width="16" height="15" viewBox="0 0 16 15" ><rect x="0.500" y="0.500" width="15" height="14" fill="#fdfdfd" stroke="#8d99a8"/><rect x="0.500" y="0.500" width="15" height="2.400" fill="#4577b0"/><rect x="2.500" y="6.500" width="4" height="4" fill="#e8b46a" stroke="#7a6a50"/><rect x="9.500" y="4.500" width="3" height="2.500" fill="#ddd" stroke="#555" stroke-width=".8"/><rect x="9.500" y="8" width="3" height="2.500" fill="#ddd" stroke="#555" stroke-width=".8"/><rect x="9.500" y="11.400" width="3" height="2.500" fill="#ddd" stroke="#555" stroke-width=".8"/><path d="M6.500 8.500h3M8 5.500v7" stroke="#555" stroke-width=".8"/></svg>
<div class="bt" style="left:535.5px;top:581.5px;font-size:11px;transform:scaleX(0.947);transform-origin:0 0;">Execution Plan</div>
<svg class="a" style="left:625px;top:581px" width="16" height="15" viewBox="0 0 16 15" ><rect x="0.500" y="0.500" width="15" height="14" fill="#fdfdfd" stroke="#8d99a8"/><rect x="0.500" y="0.500" width="15" height="2.400" fill="#4577b0"/><rect x="3" y="5" width="2.600" height="8" fill="#f0a63a" stroke="#c9821c" stroke-width=".6"/><rect x="7" y="8" width="2.600" height="5" fill="#e85d4a" stroke="#b93c2c" stroke-width=".6"/><rect x="11" y="9.500" width="2.600" height="3.500" fill="#4a8fd8" stroke="#2f6cb3" stroke-width=".6"/></svg>
<div class="bt" style="left:644.8px;top:581.5px;font-size:11px;transform:scaleX(0.968);transform-origin:0 0;">Client Statistics</div>
<div class="bs" style="left:731px"></div>
<div class="a" style="left:26px;top:607.500px;width:84px;height:21px;background:#bebebe"></div>
<svg class="a" style="left:37px;top:613px" width="13" height="11" viewBox="0 0 13 11" ><rect x="0" y="0.500" width="13" height="2.200" fill="#7fc0f0"/><g fill="#ececec"><rect x="0.500" y="4" width="2.300" height="1.800"/><rect x="3.800" y="4" width="2.300" height="1.800"/><rect x="7.100" y="4" width="2.300" height="1.800"/><rect x="10.400" y="4" width="2.300" height="1.800"/><rect x="0.500" y="6.700" width="2.300" height="1.800"/><rect x="3.800" y="6.700" width="2.300" height="1.800"/><rect x="7.100" y="6.700" width="2.300" height="1.800"/><rect x="10.400" y="6.700" width="2.300" height="1.800"/><rect x="0.500" y="9.300" width="2.300" height="1.700"/><rect x="3.800" y="9.300" width="2.300" height="1.700"/><rect x="7.100" y="9.300" width="2.300" height="1.700"/><rect x="10.400" y="9.300" width="2.300" height="1.700"/></g></svg>
<div class="t" style="left:53.2px;top:611px;font-size:11px;transform:scaleX(0.979);transform-origin:0 0;">F5: Detail</div>
<div class="a" style="left:7px;top:629px;width:956px;height:1px;background:#b9b9b9"></div>
<div class="t" style="left:19px;top:634px;font-size:11px;transform:scaleX(.978);transform-origin:0 0">Local Database Servers / Oracle v12.1.0.2.0 / My Schema / Tables / ACCESS$</div>
<div class="a" style="left:763px;top:629px;width:200px;height:22px;border:1px solid #a6a6a6;border-bottom-color:#d0d0d0;border-right-color:#d8d8d8"></div>
<div class="a" style="left:764px;top:632px;width:20px;height:19px;background:#bdbdbd"></div>
<div class="a" style="left:784px;top:632px;width:5px;height:19px;background:#dedede"></div>
<div class="t" style="left:814.5px;top:634px;font-size:11px;transform:scaleX(0.974);transform-origin:0 0;">191 : 240 : 1,820 MB</div>
<svg class="a" style="left:948px;top:632px" width="14" height="17" viewBox="0 0 14 17" ><path d="M4.500 2.500v-1.500h5v1.500" fill="none" stroke="#3b7fc9" stroke-width="1.200"/><path d="M0.500 3.500h13" stroke="#3b7fc9" stroke-width="1.600"/><path d="M1.500 5h11l-.8 11h-9.400z" fill="#d9ebfb" stroke="#3b7fc9" stroke-width="1.200"/><path d="M4.500 7v7M7 7v7M9.500 7v7" stroke="#3b7fc9" stroke-width="1.200"/></svg>
</body></html>
